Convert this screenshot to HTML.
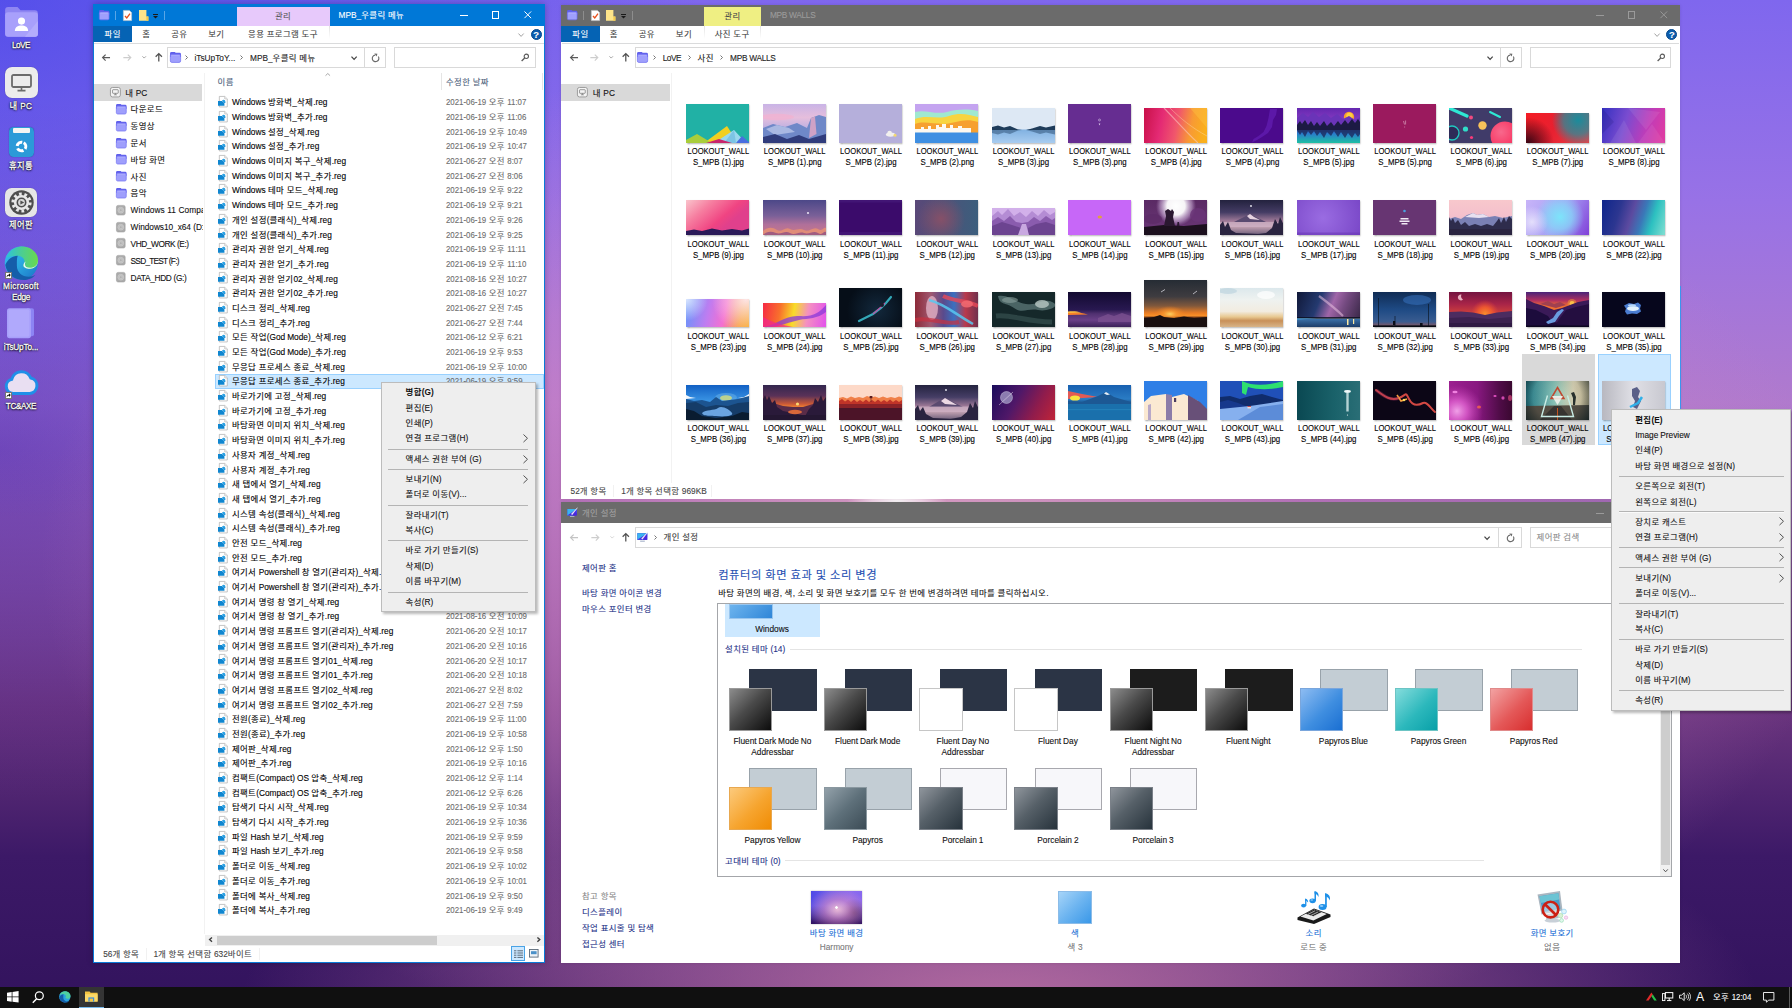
<!DOCTYPE html>
<html lang="ko"><head><meta charset="utf-8"><title>Desktop</title>
<style>
*{box-sizing:border-box;margin:0;padding:0}
html,body{width:1792px;height:1008px;overflow:hidden;background:#3a1a66}
body{font-family:"Liberation Sans","Noto Sans CJK KR",sans-serif;font-size:8.4px;letter-spacing:.4px;word-spacing:-.3px;color:#000;line-height:1;-webkit-text-stroke:.1px}
i{font-style:normal;font-size:.99em;letter-spacing:0;display:inline-block;transform:scaleY(1.05);transform-origin:50% 78%}
.fd i{font-size:.937em}
#desk{position:absolute;left:0;top:0;width:1792px;height:1008px;overflow:hidden;
background:
radial-gradient(ellipse 50px 14px at 897px 501px,rgba(255,255,255,.95) 0%,rgba(255,240,250,.7) 50%,rgba(255,230,245,0) 100%),
radial-gradient(ellipse 760px 260px at 1000px 1010px,rgba(186,112,164,.95) 0%,rgba(170,100,160,.6) 45%,rgba(150,80,150,0) 100%),
radial-gradient(ellipse 900px 520px at 940px 560px,rgba(236,176,204,.95) 0%,rgba(206,128,196,.62) 42%,rgba(190,120,200,0) 100%),
radial-gradient(ellipse 700px 520px at 0px 0px,rgba(58,64,232,.6) 0%,rgba(58,64,232,0) 100%),
radial-gradient(ellipse 500px 350px at 0px 450px,rgba(66,30,170,.5) 0%,rgba(66,30,170,0) 100%),
linear-gradient(180deg,#7f67ee 0%,#9872e6 20%,#b07acd 40%,#9a66b6 50%,#6b357e 70%,#3c1967 85%,#32135d 100%)}
.a{position:absolute}
.t{position:absolute;white-space:nowrap;transform:translateY(-50%)}
.tc{position:absolute;white-space:nowrap;transform:translate(-50%,-50%);text-align:center}
.win{position:absolute;background:#fff;overflow:hidden}
svg{position:absolute;overflow:visible}
.dlab{position:absolute;word-spacing:0;color:#fff;font-size:8.2px;-webkit-text-stroke:.25px;text-align:center;white-space:nowrap;transform:translate(-50%,-50%) scaleY(1.1);text-shadow:0 0 2px #000,0 1px 2px rgba(0,0,0,.9),0 0 1px #000}
.menu{position:absolute;background:#f2f2f2;border:1px solid #a0a0a0;box-shadow:2px 2px 3px rgba(0,0,0,.35)}
.menu .sep{position:absolute;height:1px;background:#919191}
.lbl{position:absolute;letter-spacing:0;word-spacing:0;width:76px;text-align:center;font-size:7.85px;line-height:9.82px;color:#000;transform:translateX(-50%) scaleY(1.12);transform-origin:50% 0}
.lbl span{font-size:7.6px}
.th{position:absolute;overflow:hidden;box-shadow:0.5px 1px 1.5px rgba(0,0,0,.35)}
.link{color:#1e3287}

</style></head><body>
<div id="desk">
<svg style="left:4.6px;top:6.8px" width="33" height="29.8" viewBox="0 0 33 30"><path d="M3 0h9.5l3 3.2H30a3 3 0 0 1 3 3V27a3 3 0 0 1-3 3H3a3 3 0 0 1-3-3V3a3 3 0 0 1 3-3z" fill="#8f86f2"/><rect x="0" y="5.2" width="33" height="24.8" rx="3.2" fill="#a8a0fb"/><path d="M20 30L33 14v13a3 3 0 0 1-3 3z" fill="#b4adfc"/><circle cx="16.5" cy="14.2" r="3.6" fill="#fff"/><path d="M9.8 24.2c0-4.2 3-5.6 6.7-5.6s6.7 1.4 6.7 5.6z" fill="#fff"/></svg>
<div class="dlab" style="left:21.00px;top:46.30px;font-size:8.2px;word-spacing:0;letter-spacing:-0.558px;transform:translate(-50%,-50%) scaleY(1.1);">LoVE</div>
<div class="a" style="left:4.6px;top:67.4px;width:33px;height:30.2px;border-radius:7px;background:#ececec;box-shadow:0 0 1px rgba(0,0,0,.4)"></div>
<svg style="left:10.6px;top:73.6px" width="21" height="18" viewBox="0 0 21 18"><rect x="1" y="1" width="19" height="12" rx="1.5" fill="none" stroke="#6b6b6b" stroke-width="1.8"/><path d="M6.5 16.6h8M10.5 13v3.4" stroke="#6b6b6b" stroke-width="1.6"/></svg>
<div class="dlab" style="left:21px;top:106.5px">내 PC</div>
<div class="a" style="left:8.6px;top:126.6px;width:25.4px;height:30.8px;border-radius:4.5px;background:#2c9ad8;box-shadow:0 0 1px rgba(0,0,40,.5)"></div>
<div class="a" style="left:12.8px;top:128.2px;width:17.2px;height:4.8px;border-radius:1px;background:#f4f4f2"></div>
<svg style="left:14.6px;top:140.2px" width="13" height="13" viewBox="0 0 13 13"><circle cx="6.500" cy="6.500" r="4.300" fill="none" stroke="#fff" stroke-width="3" stroke-dasharray="6.800 2.200" transform="rotate(-60 6.500 6.500)"/><circle cx="6.500" cy="6.500" r="2.300" fill="#2c9ad8"/></svg>
<div class="dlab" style="left:21px;top:167px">휴지통</div>
<div class="a" style="left:5px;top:188.2px;width:32.2px;height:28.8px;border-radius:6.5px;background:#e6e6e6;box-shadow:0 0 1px rgba(0,0,0,.4)"></div>
<svg style="left:8.6px;top:190.2px" width="25" height="25" viewBox="0 0 25 25"><circle cx="12.500" cy="12.500" r="12.200" fill="#4e4e4e"/><circle cx="12.500" cy="12.500" r="8.600" fill="none" stroke="#e8e8e8" stroke-width="3" stroke-dasharray="2.700 2.700"/><circle cx="12.500" cy="12.500" r="6.300" fill="none" stroke="#e8e8e8" stroke-width="2.600"/><circle cx="12.500" cy="12.500" r="3.400" fill="#d8d8d8"/><path d="M11.400 10.400l3.800 2.100-3.800 2.100z" fill="#4e4e4e"/></svg>
<div class="dlab" style="left:21px;top:226.4px">제어판</div>
<svg style="left:4px;top:245.6px" width="34.6" height="34" viewBox="0 0 34 34"><defs><linearGradient id="eg1" x1="0" y1="0" x2="1" y2="1"><stop offset="0" stop-color="#35c1f1"/><stop offset=".5" stop-color="#2aa7e0"/><stop offset="1" stop-color="#1b6fc4"/></linearGradient><linearGradient id="eg2" x1="0" y1="0" x2="1" y2="0"><stop offset="0" stop-color="#2fc3d6"/><stop offset="1" stop-color="#6ad94b"/></linearGradient></defs><circle cx="17" cy="17" r="16.6" fill="url(#eg1)"/><path d="M2 12C5 3 13 .4 18 .4c9 0 15.8 6.4 15.8 14 0 5-4 8.400-8.600 8.400-3.800 0-6.400-1.600-6.400-3.400 0-1.400 1.400-1.800 1.400-4 0-3-3-5.600-7.200-5.600C8 9.800 4 11 2 12z" fill="url(#eg2)"/><path d="M12.600 20c0 6 5 10.800 11.800 10.800 2.600 0 5-.8 6.800-2-3 4-7.600 5.200-11.600 5.200C10.200 34 2.600 28 1 19c2.400-5.600 7-9.200 12.400-9.200-1 2.600-.8 6.400-.8 10.200z" fill="#155eaa"/><path d="M19.200 19.400c0 1.800 2.600 3.400 6.200 3.400 4.400 0 8.200-3.200 8.400-8-1 6-5 7-8 7-3.200 0-5.200-1.200-5.200-3.600 0-1.200.6-1.800.8-2.600-1.400.8-2.200 2.200-2.200 3.800z" fill="#e6f4fb"/></svg>
<div class="a" style="left:4.6px;top:271.6px;width:7.4px;height:7.4px;background:#fff;border:.6px solid #777"></div><svg style="left:5.8px;top:272.8px" width="5" height="5" viewBox="0 0 10 10"><path d="M1 9C1 5 3.500 3 6 3V.6L9.600 4.200 6 7.800V5.400C4 5.400 2.400 6.400 1 9z" fill="#111"/></svg>
<div class="dlab" style="left:21.00px;top:287.40px;font-size:8.2px;word-spacing:0;letter-spacing:0.287px;transform:translate(-50%,-50%) scaleY(1.1);">Microsoft</div>
<div class="dlab" style="left:21.00px;top:297.90px;font-size:8.2px;word-spacing:0;letter-spacing:-0.281px;transform:translate(-50%,-50%) scaleY(1.1);">Edge</div>
<svg style="left:7.4px;top:308px" width="27" height="30.4" viewBox="0 0 27 30"><path d="M20 0h5a2 2 0 0 1 2 2v24a2 2 0 0 1-2 2h-5z" fill="#8c84f4"/><rect x="20.600" y="5" width="2.6" height="8" fill="#f4f2ff"/><rect x="0" y="0" width="24" height="30" rx="2.600" fill="#a79ffb"/><rect x="1.400" y="1.400" width="21" height="27.200" rx="2" fill="#b0a9fc"/></svg>
<div class="dlab" style="left:21.00px;top:347.80px;font-size:8.2px;word-spacing:0;letter-spacing:-0.165px;transform:translate(-50%,-50%) scaleY(1.1);">iTsUpTo...</div>
<svg style="left:4px;top:368.6px" width="34.4" height="26" viewBox="0 0 34 26"><path d="M9 24.400A7.200 7.200 0 0 1 7.600 10.200 10 10 0 0 1 26.600 9 7.800 7.800 0 0 1 25.600 24.400z" fill="#e9dff2" stroke="#1f8fe8" stroke-width="3"/></svg>
<div class="a" style="left:4.6px;top:391.6px;width:7.4px;height:7.4px;background:#fff;border:.6px solid #777"></div><svg style="left:5.8px;top:392.8px" width="5" height="5" viewBox="0 0 10 10"><path d="M1 9C1 5 3.500 3 6 3V.6L9.600 4.200 6 7.800V5.400C4 5.400 2.400 6.400 1 9z" fill="#111"/></svg>
<div class="dlab" style="left:21.00px;top:407.30px;font-size:8.2px;word-spacing:0;letter-spacing:-0.394px;transform:translate(-50%,-50%) scaleY(1.1);">TC&amp;AXE</div>
<div class="a" style="left:92.60px;top:4.00px;width:452.40px;height:959.00px;background:#fff;border:1px solid #0a7ad6;box-shadow:0 0 6px rgba(0,0,0,.25)"></div>
<div class="a" style="left:92.60px;top:4.00px;width:452.40px;height:22.00px;background:#0078d7"></div>
<svg style="left:99.20px;top:9.70px" width="10.40" height="10.19" viewBox="0 0 22 21.600"><path d="M3 0h6.500l2 1.600H19a3 3 0 0 1 3 3V10H0V3a3 3 0 0 1 3-3z" fill="#5f5fea"/><rect x=".7" y="4.300" width="20.600" height="16.600" rx="3" fill="#9f9ffc" stroke="#6e6ef2" stroke-width="1.400"/><rect x="3" y="6" width="16" height="1.200" rx=".6" fill="#b8b8fe" opacity=".8"/></svg>
<div class="a" style="left:115.20px;top:10.60px;width:0.80px;height:9.00px;background:#5aa6e6"></div>
<svg style="left:123.00px;top:10.00px" width="9.00" height="11.00" viewBox="0 0 9 11"><path d="M.4.4h6l2.200 2.200v8H.4z" fill="#fff" stroke="#c8c8c8" stroke-width=".6"/><path d="M2 6l1.800 2L7 3.600" fill="none" stroke="#e8501c" stroke-width="1.300"/></svg>
<svg style="left:138.60px;top:10.00px" width="9.40" height="10.80" viewBox="0 0 9.400 10.800"><path d="M0 0h7.400v6.400h2v4.400H0z" fill="#fde48a"/><path d="M7.400 6.400h2v4.400h-2z" fill="#f2c94c"/></svg>
<div class="a" style="left:153.40px;top:14.20px;width:5.00px;height:0.90px;background:#1a1a1a"></div>
<svg style="left:153.40px;top:15.80px" width="5.00" height="2.60" viewBox="0 0 5 2.600"><path d="M0 0h5L2.500 2.600z" fill="#1a1a1a"/></svg>
<div class="a" style="left:164.40px;top:10.60px;width:0.80px;height:9.00px;background:#5aa6e6"></div>
<div class="a" style="left:236.80px;top:6.80px;width:92.80px;height:19.40px;background:#e7c9fb"></div>
<div class="tc" style="left:283.00px;top:16.00px;color:#5a5a5a;">관리</div>
<div class="t" style="left:338.60px;top:15.00px;color:#fff;"><i>MPB_</i>우클릭 메뉴</div>
<div class="a" style="left:460.40px;top:15.00px;width:7.40px;height:0.90px;background:#fff"></div>
<div class="a" style="left:492.00px;top:11.40px;width:7.20px;height:7.20px;border:1px solid #fff"></div>
<svg style="left:523.80px;top:11.20px" width="7.60" height="7.60" viewBox="0 0 10 10"><path d="M.6.6l8.800 8.800M9.400.6L.6 9.400" stroke="#fff" stroke-width="1.300"/></svg>
<div class="a" style="left:93.60px;top:26.00px;width:450.40px;height:17.00px;background:#fff"></div>
<div class="a" style="left:93.60px;top:42.80px;width:450.40px;height:0.80px;background:#dadbdc"></div>
<div class="a" style="left:92.60px;top:26.00px;width:39.30px;height:15.90px;background:#0563b4"></div>
<div class="tc" style="left:112.70px;top:34.20px;color:#fff;">파일</div>
<div class="tc" style="left:146.30px;top:34.20px;color:#444;">홈</div>
<div class="tc" style="left:179.30px;top:34.20px;color:#444;">공유</div>
<div class="tc" style="left:216.30px;top:34.20px;color:#444;">보기</div>
<div class="tc" style="left:282.90px;top:34.20px;color:#444;">응용 프로그램 도구</div>
<div class="a" style="left:236.60px;top:26.00px;width:0.80px;height:13.00px;background:linear-gradient(#e2e2e2,#fff)"></div>
<div class="a" style="left:329.20px;top:26.00px;width:0.80px;height:13.00px;background:linear-gradient(#e2e2e2,#fff)"></div>
<svg style="left:517.90px;top:32.60px" width="6.20" height="4.20" viewBox="0 0 10 6.600"><path d="M.8.8L5 5.400 9.200.8" fill="none" stroke="#9a9a9a" stroke-width="1.5"/></svg>
<div class="a" style="left:530.60px;top:28.80px;width:11.20px;height:11.20px;border-radius:50%;background:#0b5cad;border:.6px solid #084a8c"></div><div class="tc" style="left:536.20px;top:34.60px;color:#fff;font-weight:bold;font-size:9.5px"><i>?</i></div>
<svg style="left:102.30px;top:54.00px" width="8.40" height="7.20" viewBox="0 0 14 12"><path d="M6 1L1 6l5 5M1 6h12.400" fill="none" stroke="#5a5a5a" stroke-width="2"/></svg><svg style="left:122.80px;top:54.00px" width="8.40" height="7.20" viewBox="0 0 14 12"><path d="M8 1l5 5-5 5M13 6H.6" fill="none" stroke="#cdcdcd" stroke-width="1.900"/></svg><svg style="left:141.60px;top:56.00px" width="4.40" height="2.60" viewBox="0 0 8 5"><path d="M.6.6L4 4 7.400.6" fill="none" stroke="#7a7a7a" stroke-width="1.300"/></svg><svg style="left:154.50px;top:53.20px" width="7.60" height="8.80" viewBox="0 0 12 14"><path d="M1 6l5-5 5 5M6 1v12.600" fill="none" stroke="#505050" stroke-width="2"/></svg>
<div class="a" style="left:167.20px;top:47.00px;width:218.60px;height:20.60px;border:1px solid #d9d9d9;background:#fff"></div>
<div class="a" style="left:364.40px;top:47.00px;width:0.90px;height:20.60px;background:#d9d9d9"></div>
<svg style="left:169.50px;top:52.01px" width="11.00" height="10.78" viewBox="0 0 22 21.600"><path d="M3 0h6.500l2 1.600H19a3 3 0 0 1 3 3V10H0V3a3 3 0 0 1 3-3z" fill="#5f5fea"/><rect x=".7" y="4.300" width="20.600" height="16.600" rx="3" fill="#9f9ffc" stroke="#6e6ef2" stroke-width="1.400"/><rect x="3" y="6" width="16" height="1.200" rx=".6" fill="#b8b8fe" opacity=".8"/></svg>
<svg style="left:185.40px;top:55.40px" width="3.00" height="5.00" viewBox="0 0 3 5"><path d="M.5.5l2 2-2 2" fill="none" stroke="#666" stroke-width=".9"/></svg>
<div class="t" style="left:194.40px;top:57.60px;color:#222;"><i>iTsUpToY...</i></div>
<svg style="left:240.40px;top:55.40px" width="3.00" height="5.00" viewBox="0 0 3 5"><path d="M.5.5l2 2-2 2" fill="none" stroke="#666" stroke-width=".9"/></svg>
<div class="t" style="left:250.00px;top:57.60px;color:#222;"><i>MPB_</i>우클릭 메뉴</div>
<svg style="left:350.90px;top:56.20px" width="6.20" height="4.20" viewBox="0 0 10 6.600"><path d="M.8.8L5 5.400 9.200.8" fill="none" stroke="#444" stroke-width="2.0"/></svg>
<svg style="left:370.50px;top:53.00px" width="9.00" height="9.60" viewBox="0 0 9 9.600"><path d="M7.300 3.500A3.300 3.300 0 1 1 4.200 2.100" fill="none" stroke="#6a6a6a" stroke-width="1.150"/><path d="M3.300.5l3.100.2-.7 2.900z" fill="#6a6a6a"/></svg>
<div class="a" style="left:394.20px;top:47.00px;width:141.40px;height:20.60px;border:1px solid #d9d9d9;background:#fff"></div>
<svg style="left:520.80px;top:53.40px" width="8.40" height="8.80" viewBox="0 0 12 12"><circle cx="7.600" cy="4.400" r="3.100" fill="none" stroke="#5a5a5a" stroke-width="1.500"/><path d="M5.300 6.800L.9 11.200" stroke="#5a5a5a" stroke-width="1.800"/></svg>
<div class="a" style="left:93.60px;top:84.00px;width:108.60px;height:16.80px;background:#d9d9d9"></div>
<div class="a" style="left:94px;top:72px;width:109px;height:860px;overflow:hidden">
<svg style="left:16.10px;top:15.10px" width="10.8" height="10.4" viewBox="0 0 22 21"><rect x=".9" y=".9" width="20.2" height="19.2" rx="4" fill="#f4f4f4" stroke="#8a8a8a" stroke-width="1.6"/><rect x="5.2" y="5.4" width="11.6" height="7.4" rx="1" fill="none" stroke="#6f6f6f" stroke-width="1.4"/><path d="M8 15.8h6M11 12.8v3" stroke="#6f6f6f" stroke-width="1.4"/></svg>
<div class="t" style="left:31.20px;top:20.50px;color:#111">내 <i>PC</i></div>
<svg style="left:21.90px;top:31.93px" width="10.60" height="10.39" viewBox="0 0 22 21.600"><path d="M3 0h6.500l2 1.600H19a3 3 0 0 1 3 3V10H0V3a3 3 0 0 1 3-3z" fill="#5f5fea"/><rect x=".7" y="4.300" width="20.600" height="16.600" rx="3" fill="#9f9ffc" stroke="#6e6ef2" stroke-width="1.400"/><rect x="3" y="6" width="16" height="1.200" rx=".6" fill="#b8b8fe" opacity=".8"/></svg>
<div class="t" style="left:36.60px;top:37.32px;color:#111">다운로드</div>
<svg style="left:21.90px;top:48.75px" width="10.60" height="10.39" viewBox="0 0 22 21.600"><path d="M3 0h6.500l2 1.600H19a3 3 0 0 1 3 3V10H0V3a3 3 0 0 1 3-3z" fill="#5f5fea"/><rect x=".7" y="4.300" width="20.600" height="16.600" rx="3" fill="#9f9ffc" stroke="#6e6ef2" stroke-width="1.400"/><rect x="3" y="6" width="16" height="1.200" rx=".6" fill="#b8b8fe" opacity=".8"/></svg>
<div class="t" style="left:36.60px;top:54.14px;color:#111">동영상</div>
<svg style="left:21.90px;top:65.57px" width="10.60" height="10.39" viewBox="0 0 22 21.600"><path d="M3 0h6.500l2 1.600H19a3 3 0 0 1 3 3V10H0V3a3 3 0 0 1 3-3z" fill="#5f5fea"/><rect x=".7" y="4.300" width="20.600" height="16.600" rx="3" fill="#9f9ffc" stroke="#6e6ef2" stroke-width="1.400"/><rect x="3" y="6" width="16" height="1.200" rx=".6" fill="#b8b8fe" opacity=".8"/></svg>
<div class="t" style="left:36.60px;top:70.96px;color:#111">문서</div>
<svg style="left:21.90px;top:82.39px" width="10.60" height="10.39" viewBox="0 0 22 21.600"><path d="M3 0h6.500l2 1.600H19a3 3 0 0 1 3 3V10H0V3a3 3 0 0 1 3-3z" fill="#5f5fea"/><rect x=".7" y="4.300" width="20.600" height="16.600" rx="3" fill="#9f9ffc" stroke="#6e6ef2" stroke-width="1.400"/><rect x="3" y="6" width="16" height="1.200" rx=".6" fill="#b8b8fe" opacity=".8"/></svg>
<div class="t" style="left:36.60px;top:87.78px;color:#111">바탕 화면</div>
<svg style="left:21.90px;top:99.21px" width="10.60" height="10.39" viewBox="0 0 22 21.600"><path d="M3 0h6.500l2 1.600H19a3 3 0 0 1 3 3V10H0V3a3 3 0 0 1 3-3z" fill="#5f5fea"/><rect x=".7" y="4.300" width="20.600" height="16.600" rx="3" fill="#9f9ffc" stroke="#6e6ef2" stroke-width="1.400"/><rect x="3" y="6" width="16" height="1.200" rx=".6" fill="#b8b8fe" opacity=".8"/></svg>
<div class="t" style="left:36.60px;top:104.60px;color:#111">사진</div>
<svg style="left:21.90px;top:116.03px" width="10.60" height="10.39" viewBox="0 0 22 21.600"><path d="M3 0h6.500l2 1.600H19a3 3 0 0 1 3 3V10H0V3a3 3 0 0 1 3-3z" fill="#5f5fea"/><rect x=".7" y="4.300" width="20.600" height="16.600" rx="3" fill="#9f9ffc" stroke="#6e6ef2" stroke-width="1.400"/><rect x="3" y="6" width="16" height="1.200" rx=".6" fill="#b8b8fe" opacity=".8"/></svg>
<div class="t" style="left:36.60px;top:121.42px;color:#111">음악</div>
<svg style="left:22.40px;top:132.84px" width="9.6" height="10.4" viewBox="0 0 20 22"><rect x=".8" y=".8" width="18.4" height="20.4" rx="3.5" fill="#ababab" stroke="#9c9c9c" stroke-width="1.2"/><circle cx="10" cy="11" r="6.2" fill="#bdbdbd" stroke="#cfcfcf" stroke-width="1.2"/><circle cx="10" cy="11" r="3" fill="#b0b0b0" stroke="#d2d2d2" stroke-width="1.1"/></svg>
<div class="t" style="left:36.60px;top:138.24px;font-size:8.3px;word-spacing:0;letter-spacing:0.085px;transform:translateY(-50%) scaleY(1.1);color:#111">Windows 11 Compa</div>
<svg style="left:22.40px;top:149.66px" width="9.6" height="10.4" viewBox="0 0 20 22"><rect x=".8" y=".8" width="18.4" height="20.4" rx="3.5" fill="#ababab" stroke="#9c9c9c" stroke-width="1.2"/><circle cx="10" cy="11" r="6.2" fill="#bdbdbd" stroke="#cfcfcf" stroke-width="1.2"/><circle cx="10" cy="11" r="3" fill="#b0b0b0" stroke="#d2d2d2" stroke-width="1.1"/></svg>
<div class="t" style="left:36.60px;top:155.06px;font-size:8.3px;word-spacing:0;letter-spacing:-0.044px;transform:translateY(-50%) scaleY(1.1);color:#111">Windows10_x64 (D:</div>
<svg style="left:22.40px;top:166.48px" width="9.6" height="10.4" viewBox="0 0 20 22"><rect x=".8" y=".8" width="18.4" height="20.4" rx="3.5" fill="#ababab" stroke="#9c9c9c" stroke-width="1.2"/><circle cx="10" cy="11" r="6.2" fill="#bdbdbd" stroke="#cfcfcf" stroke-width="1.2"/><circle cx="10" cy="11" r="3" fill="#b0b0b0" stroke="#d2d2d2" stroke-width="1.1"/></svg>
<div class="t" style="left:36.60px;top:171.88px;font-size:8.3px;word-spacing:0;letter-spacing:-0.425px;transform:translateY(-50%) scaleY(1.1);color:#111">VHD_WORK (E:)</div>
<svg style="left:22.40px;top:183.30px" width="9.6" height="10.4" viewBox="0 0 20 22"><rect x=".8" y=".8" width="18.4" height="20.4" rx="3.5" fill="#ababab" stroke="#9c9c9c" stroke-width="1.2"/><circle cx="10" cy="11" r="6.2" fill="#bdbdbd" stroke="#cfcfcf" stroke-width="1.2"/><circle cx="10" cy="11" r="3" fill="#b0b0b0" stroke="#d2d2d2" stroke-width="1.1"/></svg>
<div class="t" style="left:36.60px;top:188.70px;font-size:8.3px;word-spacing:0;letter-spacing:-0.757px;transform:translateY(-50%) scaleY(1.1);color:#111">SSD_TEST (F:)</div>
<svg style="left:22.40px;top:200.12px" width="9.6" height="10.4" viewBox="0 0 20 22"><rect x=".8" y=".8" width="18.4" height="20.4" rx="3.5" fill="#ababab" stroke="#9c9c9c" stroke-width="1.2"/><circle cx="10" cy="11" r="6.2" fill="#bdbdbd" stroke="#cfcfcf" stroke-width="1.2"/><circle cx="10" cy="11" r="3" fill="#b0b0b0" stroke="#d2d2d2" stroke-width="1.1"/></svg>
<div class="t" style="left:36.60px;top:205.52px;font-size:8.3px;word-spacing:0;letter-spacing:-0.321px;transform:translateY(-50%) scaleY(1.1);color:#111">DATA_HDD (G:)</div>
</div>
<div class="a" style="left:204.40px;top:73.00px;width:0.80px;height:861.00px;background:#f2f2f2"></div>
<div class="t" style="left:217.60px;top:81.60px;color:#4c607a;">이름</div>
<div class="t" style="left:446.00px;top:81.60px;color:#4c607a;">수정한 날짜</div>
<div class="a" style="left:441.40px;top:73.00px;width:0.80px;height:17.40px;background:#e5e5e5"></div>
<div class="a" style="left:542.00px;top:73.00px;width:0.80px;height:17.40px;background:#e5e5e5"></div>
<svg style="left:324.60px;top:73.40px" width="5.60" height="3.00" viewBox="0 0 8 4.500"><path d="M.6 4L4 .8 7.400 4" fill="none" stroke="#7a7a7a" stroke-width="1"/></svg>
<div class="a" style="left:215.00px;top:373.91px;width:329.00px;height:14.60px;background:#cce8ff;border:1px solid #99d1ff"></div>
<svg style="left:218.30px;top:96.20px" width="9.8" height="11.4" viewBox="0 0 19 22"><path d="M2.600 .8h10.400l5 4.800V21.200H2.600z" fill="#fff" stroke="#a8a8a8" stroke-width="1.300"/><path d="M13 .8v4.800h5" fill="#f4f4f4" stroke="#a8a8a8" stroke-width="1"/><path d="M0 9.600h8l2-2.400 3.600 1.600 1 3.600-2.200 2 .2 4.600H0z" fill="#0f86d0"/><path d="M8.400 9.400l2-2 2.600 1.200.8 2.800-2 1.800-1.600-2z" fill="#2aa4e6"/><path d="M8.600 10.400l1.800 1.800M11.800 13.200l1.400 1.600" stroke="#e8f6fe" stroke-width="1.300"/></svg>
<div class="t" style="left:231.90px;top:102.30px;color:#000"><i>Windows</i> 방화벽<i>_</i>삭제<i>.reg</i></div>
<div class="t fd" style="left:446.00px;top:102.30px;color:#6d6d6d"><i>2021-06-19</i> 오후 <i>11:07</i></div>
<svg style="left:218.30px;top:110.89px" width="9.8" height="11.4" viewBox="0 0 19 22"><path d="M2.600 .8h10.400l5 4.800V21.200H2.600z" fill="#fff" stroke="#a8a8a8" stroke-width="1.300"/><path d="M13 .8v4.800h5" fill="#f4f4f4" stroke="#a8a8a8" stroke-width="1"/><path d="M0 9.600h8l2-2.400 3.600 1.600 1 3.600-2.200 2 .2 4.600H0z" fill="#0f86d0"/><path d="M8.400 9.400l2-2 2.600 1.200.8 2.800-2 1.800-1.600-2z" fill="#2aa4e6"/><path d="M8.600 10.400l1.800 1.800M11.800 13.200l1.400 1.600" stroke="#e8f6fe" stroke-width="1.300"/></svg>
<div class="t" style="left:231.90px;top:116.99px;color:#000"><i>Windows</i> 방화벽<i>_</i>추가<i>.reg</i></div>
<div class="t fd" style="left:446.00px;top:116.99px;color:#6d6d6d"><i>2021-06-19</i> 오후 <i>11:06</i></div>
<svg style="left:218.30px;top:125.58px" width="9.8" height="11.4" viewBox="0 0 19 22"><path d="M2.600 .8h10.400l5 4.800V21.200H2.600z" fill="#fff" stroke="#a8a8a8" stroke-width="1.300"/><path d="M13 .8v4.800h5" fill="#f4f4f4" stroke="#a8a8a8" stroke-width="1"/><path d="M0 9.600h8l2-2.400 3.600 1.600 1 3.600-2.200 2 .2 4.600H0z" fill="#0f86d0"/><path d="M8.400 9.400l2-2 2.600 1.200.8 2.800-2 1.800-1.600-2z" fill="#2aa4e6"/><path d="M8.600 10.400l1.800 1.800M11.800 13.200l1.400 1.600" stroke="#e8f6fe" stroke-width="1.300"/></svg>
<div class="t" style="left:231.90px;top:131.68px;color:#000"><i>Windows</i> 설정<i>_</i>삭제<i>.reg</i></div>
<div class="t fd" style="left:446.00px;top:131.68px;color:#6d6d6d"><i>2021-06-19</i> 오후 <i>10:49</i></div>
<svg style="left:218.30px;top:140.27px" width="9.8" height="11.4" viewBox="0 0 19 22"><path d="M2.600 .8h10.400l5 4.800V21.200H2.600z" fill="#fff" stroke="#a8a8a8" stroke-width="1.300"/><path d="M13 .8v4.800h5" fill="#f4f4f4" stroke="#a8a8a8" stroke-width="1"/><path d="M0 9.600h8l2-2.400 3.600 1.600 1 3.600-2.200 2 .2 4.600H0z" fill="#0f86d0"/><path d="M8.400 9.400l2-2 2.600 1.200.8 2.800-2 1.800-1.600-2z" fill="#2aa4e6"/><path d="M8.600 10.400l1.800 1.800M11.800 13.200l1.400 1.600" stroke="#e8f6fe" stroke-width="1.300"/></svg>
<div class="t" style="left:231.90px;top:146.37px;color:#000"><i>Windows</i> 설정<i>_</i>추가<i>.reg</i></div>
<div class="t fd" style="left:446.00px;top:146.37px;color:#6d6d6d"><i>2021-06-19</i> 오후 <i>10:47</i></div>
<svg style="left:218.30px;top:154.96px" width="9.8" height="11.4" viewBox="0 0 19 22"><path d="M2.600 .8h10.400l5 4.800V21.200H2.600z" fill="#fff" stroke="#a8a8a8" stroke-width="1.300"/><path d="M13 .8v4.800h5" fill="#f4f4f4" stroke="#a8a8a8" stroke-width="1"/><path d="M0 9.600h8l2-2.400 3.600 1.600 1 3.600-2.200 2 .2 4.600H0z" fill="#0f86d0"/><path d="M8.400 9.400l2-2 2.600 1.200.8 2.800-2 1.800-1.600-2z" fill="#2aa4e6"/><path d="M8.600 10.400l1.800 1.800M11.800 13.200l1.400 1.600" stroke="#e8f6fe" stroke-width="1.300"/></svg>
<div class="t" style="left:231.90px;top:161.06px;color:#000"><i>Windows</i> 이미지 복구<i>_</i>삭제<i>.reg</i></div>
<div class="t fd" style="left:446.00px;top:161.06px;color:#6d6d6d"><i>2021-06-27</i> 오전 <i>8:07</i></div>
<svg style="left:218.30px;top:169.65px" width="9.8" height="11.4" viewBox="0 0 19 22"><path d="M2.600 .8h10.400l5 4.800V21.200H2.600z" fill="#fff" stroke="#a8a8a8" stroke-width="1.300"/><path d="M13 .8v4.800h5" fill="#f4f4f4" stroke="#a8a8a8" stroke-width="1"/><path d="M0 9.600h8l2-2.400 3.600 1.600 1 3.600-2.200 2 .2 4.600H0z" fill="#0f86d0"/><path d="M8.400 9.400l2-2 2.600 1.200.8 2.800-2 1.800-1.600-2z" fill="#2aa4e6"/><path d="M8.600 10.400l1.800 1.800M11.800 13.200l1.400 1.600" stroke="#e8f6fe" stroke-width="1.300"/></svg>
<div class="t" style="left:231.90px;top:175.75px;color:#000"><i>Windows</i> 이미지 복구<i>_</i>추가<i>.reg</i></div>
<div class="t fd" style="left:446.00px;top:175.75px;color:#6d6d6d"><i>2021-06-27</i> 오전 <i>8:06</i></div>
<svg style="left:218.30px;top:184.34px" width="9.8" height="11.4" viewBox="0 0 19 22"><path d="M2.600 .8h10.400l5 4.800V21.200H2.600z" fill="#fff" stroke="#a8a8a8" stroke-width="1.300"/><path d="M13 .8v4.800h5" fill="#f4f4f4" stroke="#a8a8a8" stroke-width="1"/><path d="M0 9.600h8l2-2.400 3.600 1.600 1 3.600-2.200 2 .2 4.600H0z" fill="#0f86d0"/><path d="M8.400 9.400l2-2 2.600 1.200.8 2.800-2 1.800-1.600-2z" fill="#2aa4e6"/><path d="M8.600 10.400l1.800 1.800M11.800 13.200l1.400 1.600" stroke="#e8f6fe" stroke-width="1.300"/></svg>
<div class="t" style="left:231.90px;top:190.44px;color:#000"><i>Windows</i> 테마 모드<i>_</i>삭제<i>.reg</i></div>
<div class="t fd" style="left:446.00px;top:190.44px;color:#6d6d6d"><i>2021-06-19</i> 오후 <i>9:22</i></div>
<svg style="left:218.30px;top:199.03px" width="9.8" height="11.4" viewBox="0 0 19 22"><path d="M2.600 .8h10.400l5 4.800V21.200H2.600z" fill="#fff" stroke="#a8a8a8" stroke-width="1.300"/><path d="M13 .8v4.800h5" fill="#f4f4f4" stroke="#a8a8a8" stroke-width="1"/><path d="M0 9.600h8l2-2.400 3.600 1.600 1 3.600-2.200 2 .2 4.600H0z" fill="#0f86d0"/><path d="M8.400 9.400l2-2 2.600 1.200.8 2.800-2 1.800-1.600-2z" fill="#2aa4e6"/><path d="M8.600 10.400l1.800 1.800M11.800 13.200l1.400 1.600" stroke="#e8f6fe" stroke-width="1.300"/></svg>
<div class="t" style="left:231.90px;top:205.13px;color:#000"><i>Windows</i> 테마 모드<i>_</i>추가<i>.reg</i></div>
<div class="t fd" style="left:446.00px;top:205.13px;color:#6d6d6d"><i>2021-06-19</i> 오후 <i>9:21</i></div>
<svg style="left:218.30px;top:213.72px" width="9.8" height="11.4" viewBox="0 0 19 22"><path d="M2.600 .8h10.400l5 4.800V21.200H2.600z" fill="#fff" stroke="#a8a8a8" stroke-width="1.300"/><path d="M13 .8v4.800h5" fill="#f4f4f4" stroke="#a8a8a8" stroke-width="1"/><path d="M0 9.600h8l2-2.400 3.600 1.600 1 3.600-2.200 2 .2 4.600H0z" fill="#0f86d0"/><path d="M8.400 9.400l2-2 2.600 1.200.8 2.800-2 1.800-1.600-2z" fill="#2aa4e6"/><path d="M8.600 10.400l1.800 1.800M11.800 13.200l1.400 1.600" stroke="#e8f6fe" stroke-width="1.300"/></svg>
<div class="t" style="left:231.90px;top:219.82px;color:#000">개인 설정<i>(</i>클래식<i>)_</i>삭제<i>.reg</i></div>
<div class="t fd" style="left:446.00px;top:219.82px;color:#6d6d6d"><i>2021-06-19</i> 오후 <i>9:26</i></div>
<svg style="left:218.30px;top:228.41px" width="9.8" height="11.4" viewBox="0 0 19 22"><path d="M2.600 .8h10.400l5 4.800V21.200H2.600z" fill="#fff" stroke="#a8a8a8" stroke-width="1.300"/><path d="M13 .8v4.800h5" fill="#f4f4f4" stroke="#a8a8a8" stroke-width="1"/><path d="M0 9.600h8l2-2.400 3.600 1.600 1 3.600-2.200 2 .2 4.600H0z" fill="#0f86d0"/><path d="M8.400 9.400l2-2 2.600 1.200.8 2.800-2 1.800-1.600-2z" fill="#2aa4e6"/><path d="M8.600 10.400l1.800 1.800M11.800 13.200l1.400 1.600" stroke="#e8f6fe" stroke-width="1.300"/></svg>
<div class="t" style="left:231.90px;top:234.51px;color:#000">개인 설정<i>(</i>클래식<i>)_</i>추가<i>.reg</i></div>
<div class="t fd" style="left:446.00px;top:234.51px;color:#6d6d6d"><i>2021-06-19</i> 오후 <i>9:25</i></div>
<svg style="left:218.30px;top:243.10px" width="9.8" height="11.4" viewBox="0 0 19 22"><path d="M2.600 .8h10.400l5 4.800V21.200H2.600z" fill="#fff" stroke="#a8a8a8" stroke-width="1.300"/><path d="M13 .8v4.800h5" fill="#f4f4f4" stroke="#a8a8a8" stroke-width="1"/><path d="M0 9.600h8l2-2.400 3.600 1.600 1 3.600-2.200 2 .2 4.600H0z" fill="#0f86d0"/><path d="M8.400 9.400l2-2 2.600 1.200.8 2.800-2 1.800-1.600-2z" fill="#2aa4e6"/><path d="M8.600 10.400l1.800 1.800M11.800 13.200l1.400 1.600" stroke="#e8f6fe" stroke-width="1.300"/></svg>
<div class="t" style="left:231.90px;top:249.20px;color:#000">관리자 권한 얻기<i>_</i>삭제<i>.reg</i></div>
<div class="t fd" style="left:446.00px;top:249.20px;color:#6d6d6d"><i>2021-06-19</i> 오후 <i>11:11</i></div>
<svg style="left:218.30px;top:257.79px" width="9.8" height="11.4" viewBox="0 0 19 22"><path d="M2.600 .8h10.400l5 4.800V21.200H2.600z" fill="#fff" stroke="#a8a8a8" stroke-width="1.300"/><path d="M13 .8v4.800h5" fill="#f4f4f4" stroke="#a8a8a8" stroke-width="1"/><path d="M0 9.600h8l2-2.400 3.600 1.600 1 3.600-2.200 2 .2 4.600H0z" fill="#0f86d0"/><path d="M8.400 9.400l2-2 2.600 1.200.8 2.800-2 1.800-1.600-2z" fill="#2aa4e6"/><path d="M8.600 10.400l1.800 1.800M11.800 13.200l1.400 1.600" stroke="#e8f6fe" stroke-width="1.300"/></svg>
<div class="t" style="left:231.90px;top:263.89px;color:#000">관리자 권한 얻기<i>_</i>추가<i>.reg</i></div>
<div class="t fd" style="left:446.00px;top:263.89px;color:#6d6d6d"><i>2021-06-19</i> 오후 <i>11:10</i></div>
<svg style="left:218.30px;top:272.48px" width="9.8" height="11.4" viewBox="0 0 19 22"><path d="M2.600 .8h10.400l5 4.800V21.200H2.600z" fill="#fff" stroke="#a8a8a8" stroke-width="1.300"/><path d="M13 .8v4.800h5" fill="#f4f4f4" stroke="#a8a8a8" stroke-width="1"/><path d="M0 9.600h8l2-2.400 3.600 1.600 1 3.600-2.200 2 .2 4.600H0z" fill="#0f86d0"/><path d="M8.400 9.400l2-2 2.600 1.200.8 2.800-2 1.800-1.600-2z" fill="#2aa4e6"/><path d="M8.600 10.400l1.800 1.800M11.800 13.200l1.400 1.600" stroke="#e8f6fe" stroke-width="1.300"/></svg>
<div class="t" style="left:231.90px;top:278.58px;color:#000">관리자 권한 얻기<i>02_</i>삭제<i>.reg</i></div>
<div class="t fd" style="left:446.00px;top:278.58px;color:#6d6d6d"><i>2021-08-16</i> 오전 <i>10:27</i></div>
<svg style="left:218.30px;top:287.17px" width="9.8" height="11.4" viewBox="0 0 19 22"><path d="M2.600 .8h10.400l5 4.800V21.200H2.600z" fill="#fff" stroke="#a8a8a8" stroke-width="1.300"/><path d="M13 .8v4.800h5" fill="#f4f4f4" stroke="#a8a8a8" stroke-width="1"/><path d="M0 9.600h8l2-2.400 3.600 1.600 1 3.600-2.200 2 .2 4.600H0z" fill="#0f86d0"/><path d="M8.400 9.400l2-2 2.600 1.200.8 2.800-2 1.800-1.600-2z" fill="#2aa4e6"/><path d="M8.600 10.400l1.800 1.800M11.800 13.200l1.400 1.600" stroke="#e8f6fe" stroke-width="1.300"/></svg>
<div class="t" style="left:231.90px;top:293.27px;color:#000">관리자 권한 얻기<i>02_</i>추가<i>.reg</i></div>
<div class="t fd" style="left:446.00px;top:293.27px;color:#6d6d6d"><i>2021-08-16</i> 오전 <i>10:27</i></div>
<svg style="left:218.30px;top:301.86px" width="9.8" height="11.4" viewBox="0 0 19 22"><path d="M2.600 .8h10.400l5 4.800V21.200H2.600z" fill="#fff" stroke="#a8a8a8" stroke-width="1.300"/><path d="M13 .8v4.800h5" fill="#f4f4f4" stroke="#a8a8a8" stroke-width="1"/><path d="M0 9.600h8l2-2.400 3.600 1.600 1 3.600-2.200 2 .2 4.600H0z" fill="#0f86d0"/><path d="M8.400 9.400l2-2 2.600 1.200.8 2.800-2 1.800-1.600-2z" fill="#2aa4e6"/><path d="M8.600 10.400l1.800 1.800M11.800 13.200l1.400 1.600" stroke="#e8f6fe" stroke-width="1.300"/></svg>
<div class="t" style="left:231.90px;top:307.96px;color:#000">디스크 정리<i>_</i>삭제<i>.reg</i></div>
<div class="t fd" style="left:446.00px;top:307.96px;color:#6d6d6d"><i>2021-06-27</i> 오전 <i>7:45</i></div>
<svg style="left:218.30px;top:316.55px" width="9.8" height="11.4" viewBox="0 0 19 22"><path d="M2.600 .8h10.400l5 4.800V21.200H2.600z" fill="#fff" stroke="#a8a8a8" stroke-width="1.300"/><path d="M13 .8v4.800h5" fill="#f4f4f4" stroke="#a8a8a8" stroke-width="1"/><path d="M0 9.600h8l2-2.400 3.600 1.600 1 3.600-2.200 2 .2 4.600H0z" fill="#0f86d0"/><path d="M8.400 9.400l2-2 2.600 1.200.8 2.800-2 1.800-1.600-2z" fill="#2aa4e6"/><path d="M8.600 10.400l1.800 1.800M11.800 13.200l1.400 1.600" stroke="#e8f6fe" stroke-width="1.300"/></svg>
<div class="t" style="left:231.90px;top:322.65px;color:#000">디스크 정리<i>_</i>추가<i>.reg</i></div>
<div class="t fd" style="left:446.00px;top:322.65px;color:#6d6d6d"><i>2021-06-27</i> 오전 <i>7:44</i></div>
<svg style="left:218.30px;top:331.24px" width="9.8" height="11.4" viewBox="0 0 19 22"><path d="M2.600 .8h10.400l5 4.800V21.200H2.600z" fill="#fff" stroke="#a8a8a8" stroke-width="1.300"/><path d="M13 .8v4.800h5" fill="#f4f4f4" stroke="#a8a8a8" stroke-width="1"/><path d="M0 9.600h8l2-2.400 3.600 1.600 1 3.600-2.200 2 .2 4.600H0z" fill="#0f86d0"/><path d="M8.400 9.400l2-2 2.600 1.200.8 2.800-2 1.800-1.600-2z" fill="#2aa4e6"/><path d="M8.600 10.400l1.800 1.800M11.800 13.200l1.400 1.600" stroke="#e8f6fe" stroke-width="1.300"/></svg>
<div class="t" style="left:231.90px;top:337.34px;color:#000">모든 작업<i>(God Mode)_</i>삭제<i>.reg</i></div>
<div class="t fd" style="left:446.00px;top:337.34px;color:#6d6d6d"><i>2021-06-12</i> 오후 <i>6:21</i></div>
<svg style="left:218.30px;top:345.93px" width="9.8" height="11.4" viewBox="0 0 19 22"><path d="M2.600 .8h10.400l5 4.800V21.200H2.600z" fill="#fff" stroke="#a8a8a8" stroke-width="1.300"/><path d="M13 .8v4.800h5" fill="#f4f4f4" stroke="#a8a8a8" stroke-width="1"/><path d="M0 9.600h8l2-2.400 3.600 1.600 1 3.600-2.200 2 .2 4.600H0z" fill="#0f86d0"/><path d="M8.400 9.400l2-2 2.600 1.200.8 2.800-2 1.800-1.600-2z" fill="#2aa4e6"/><path d="M8.600 10.400l1.800 1.800M11.800 13.200l1.400 1.600" stroke="#e8f6fe" stroke-width="1.300"/></svg>
<div class="t" style="left:231.90px;top:352.03px;color:#000">모든 작업<i>(God Mode)_</i>추가<i>.reg</i></div>
<div class="t fd" style="left:446.00px;top:352.03px;color:#6d6d6d"><i>2021-06-19</i> 오후 <i>9:53</i></div>
<svg style="left:218.30px;top:360.62px" width="9.8" height="11.4" viewBox="0 0 19 22"><path d="M2.600 .8h10.400l5 4.800V21.200H2.600z" fill="#fff" stroke="#a8a8a8" stroke-width="1.300"/><path d="M13 .8v4.800h5" fill="#f4f4f4" stroke="#a8a8a8" stroke-width="1"/><path d="M0 9.600h8l2-2.400 3.600 1.600 1 3.600-2.200 2 .2 4.600H0z" fill="#0f86d0"/><path d="M8.400 9.400l2-2 2.600 1.200.8 2.800-2 1.800-1.600-2z" fill="#2aa4e6"/><path d="M8.600 10.400l1.800 1.800M11.800 13.200l1.400 1.600" stroke="#e8f6fe" stroke-width="1.300"/></svg>
<div class="t" style="left:231.90px;top:366.72px;color:#000">무응답 프로세스 종료<i>_</i>삭제<i>.reg</i></div>
<div class="t fd" style="left:446.00px;top:366.72px;color:#6d6d6d"><i>2021-06-19</i> 오후 <i>10:00</i></div>
<svg style="left:218.30px;top:375.31px" width="9.8" height="11.4" viewBox="0 0 19 22"><path d="M2.600 .8h10.400l5 4.800V21.200H2.600z" fill="#fff" stroke="#a8a8a8" stroke-width="1.300"/><path d="M13 .8v4.800h5" fill="#f4f4f4" stroke="#a8a8a8" stroke-width="1"/><path d="M0 9.600h8l2-2.400 3.600 1.600 1 3.600-2.200 2 .2 4.600H0z" fill="#0f86d0"/><path d="M8.400 9.400l2-2 2.600 1.200.8 2.800-2 1.800-1.600-2z" fill="#2aa4e6"/><path d="M8.600 10.400l1.800 1.800M11.800 13.200l1.400 1.600" stroke="#e8f6fe" stroke-width="1.300"/></svg>
<div class="t" style="left:231.90px;top:381.41px;color:#000">무응답 프로세스 종료<i>_</i>추가<i>.reg</i></div>
<div class="t fd" style="left:446.00px;top:381.41px;color:#6d6d6d"><i>2021-06-19</i> 오후 <i>9:59</i></div>
<svg style="left:218.30px;top:390.00px" width="9.8" height="11.4" viewBox="0 0 19 22"><path d="M2.600 .8h10.400l5 4.800V21.200H2.600z" fill="#fff" stroke="#a8a8a8" stroke-width="1.300"/><path d="M13 .8v4.800h5" fill="#f4f4f4" stroke="#a8a8a8" stroke-width="1"/><path d="M0 9.600h8l2-2.400 3.600 1.600 1 3.600-2.200 2 .2 4.600H0z" fill="#0f86d0"/><path d="M8.400 9.400l2-2 2.600 1.200.8 2.800-2 1.800-1.600-2z" fill="#2aa4e6"/><path d="M8.600 10.400l1.800 1.800M11.800 13.200l1.400 1.600" stroke="#e8f6fe" stroke-width="1.300"/></svg>
<div class="t" style="left:231.90px;top:396.10px;color:#000">바로가기에 고정<i>_</i>삭제<i>.reg</i></div>
<svg style="left:218.30px;top:404.69px" width="9.8" height="11.4" viewBox="0 0 19 22"><path d="M2.600 .8h10.400l5 4.800V21.200H2.600z" fill="#fff" stroke="#a8a8a8" stroke-width="1.300"/><path d="M13 .8v4.800h5" fill="#f4f4f4" stroke="#a8a8a8" stroke-width="1"/><path d="M0 9.600h8l2-2.400 3.600 1.600 1 3.600-2.200 2 .2 4.600H0z" fill="#0f86d0"/><path d="M8.400 9.400l2-2 2.600 1.200.8 2.800-2 1.800-1.600-2z" fill="#2aa4e6"/><path d="M8.600 10.400l1.800 1.800M11.800 13.200l1.400 1.600" stroke="#e8f6fe" stroke-width="1.300"/></svg>
<div class="t" style="left:231.90px;top:410.79px;color:#000">바로가기에 고정<i>_</i>추가<i>.reg</i></div>
<svg style="left:218.30px;top:419.38px" width="9.8" height="11.4" viewBox="0 0 19 22"><path d="M2.600 .8h10.400l5 4.800V21.200H2.600z" fill="#fff" stroke="#a8a8a8" stroke-width="1.300"/><path d="M13 .8v4.800h5" fill="#f4f4f4" stroke="#a8a8a8" stroke-width="1"/><path d="M0 9.600h8l2-2.400 3.600 1.600 1 3.600-2.200 2 .2 4.600H0z" fill="#0f86d0"/><path d="M8.400 9.400l2-2 2.600 1.200.8 2.800-2 1.800-1.600-2z" fill="#2aa4e6"/><path d="M8.600 10.400l1.800 1.800M11.800 13.200l1.400 1.600" stroke="#e8f6fe" stroke-width="1.300"/></svg>
<div class="t" style="left:231.90px;top:425.48px;color:#000">바탕화면 이미지 위치<i>_</i>삭제<i>.reg</i></div>
<svg style="left:218.30px;top:434.07px" width="9.8" height="11.4" viewBox="0 0 19 22"><path d="M2.600 .8h10.400l5 4.800V21.200H2.600z" fill="#fff" stroke="#a8a8a8" stroke-width="1.300"/><path d="M13 .8v4.800h5" fill="#f4f4f4" stroke="#a8a8a8" stroke-width="1"/><path d="M0 9.600h8l2-2.400 3.600 1.600 1 3.600-2.200 2 .2 4.600H0z" fill="#0f86d0"/><path d="M8.400 9.400l2-2 2.600 1.200.8 2.800-2 1.800-1.600-2z" fill="#2aa4e6"/><path d="M8.600 10.400l1.800 1.800M11.800 13.200l1.400 1.600" stroke="#e8f6fe" stroke-width="1.300"/></svg>
<div class="t" style="left:231.90px;top:440.17px;color:#000">바탕화면 이미지 위치<i>_</i>추가<i>.reg</i></div>
<svg style="left:218.30px;top:448.76px" width="9.8" height="11.4" viewBox="0 0 19 22"><path d="M2.600 .8h10.400l5 4.800V21.200H2.600z" fill="#fff" stroke="#a8a8a8" stroke-width="1.300"/><path d="M13 .8v4.800h5" fill="#f4f4f4" stroke="#a8a8a8" stroke-width="1"/><path d="M0 9.600h8l2-2.400 3.600 1.600 1 3.600-2.200 2 .2 4.600H0z" fill="#0f86d0"/><path d="M8.400 9.400l2-2 2.600 1.200.8 2.800-2 1.800-1.600-2z" fill="#2aa4e6"/><path d="M8.600 10.400l1.800 1.800M11.800 13.200l1.400 1.600" stroke="#e8f6fe" stroke-width="1.300"/></svg>
<div class="t" style="left:231.90px;top:454.86px;color:#000">사용자 계정<i>_</i>삭제<i>.reg</i></div>
<svg style="left:218.30px;top:463.45px" width="9.8" height="11.4" viewBox="0 0 19 22"><path d="M2.600 .8h10.400l5 4.800V21.200H2.600z" fill="#fff" stroke="#a8a8a8" stroke-width="1.300"/><path d="M13 .8v4.800h5" fill="#f4f4f4" stroke="#a8a8a8" stroke-width="1"/><path d="M0 9.600h8l2-2.400 3.600 1.600 1 3.600-2.200 2 .2 4.600H0z" fill="#0f86d0"/><path d="M8.400 9.400l2-2 2.600 1.200.8 2.800-2 1.800-1.600-2z" fill="#2aa4e6"/><path d="M8.600 10.400l1.800 1.800M11.800 13.200l1.400 1.600" stroke="#e8f6fe" stroke-width="1.300"/></svg>
<div class="t" style="left:231.90px;top:469.55px;color:#000">사용자 계정<i>_</i>추가<i>.reg</i></div>
<svg style="left:218.30px;top:478.14px" width="9.8" height="11.4" viewBox="0 0 19 22"><path d="M2.600 .8h10.400l5 4.800V21.200H2.600z" fill="#fff" stroke="#a8a8a8" stroke-width="1.300"/><path d="M13 .8v4.800h5" fill="#f4f4f4" stroke="#a8a8a8" stroke-width="1"/><path d="M0 9.600h8l2-2.400 3.600 1.600 1 3.600-2.200 2 .2 4.600H0z" fill="#0f86d0"/><path d="M8.400 9.400l2-2 2.600 1.200.8 2.800-2 1.800-1.600-2z" fill="#2aa4e6"/><path d="M8.600 10.400l1.800 1.800M11.800 13.200l1.400 1.600" stroke="#e8f6fe" stroke-width="1.300"/></svg>
<div class="t" style="left:231.90px;top:484.24px;color:#000">새 탭에서 열기<i>_</i>삭제<i>.reg</i></div>
<svg style="left:218.30px;top:492.83px" width="9.8" height="11.4" viewBox="0 0 19 22"><path d="M2.600 .8h10.400l5 4.800V21.200H2.600z" fill="#fff" stroke="#a8a8a8" stroke-width="1.300"/><path d="M13 .8v4.800h5" fill="#f4f4f4" stroke="#a8a8a8" stroke-width="1"/><path d="M0 9.600h8l2-2.400 3.600 1.600 1 3.600-2.200 2 .2 4.600H0z" fill="#0f86d0"/><path d="M8.400 9.400l2-2 2.600 1.200.8 2.800-2 1.800-1.600-2z" fill="#2aa4e6"/><path d="M8.600 10.400l1.800 1.800M11.800 13.200l1.400 1.600" stroke="#e8f6fe" stroke-width="1.300"/></svg>
<div class="t" style="left:231.90px;top:498.93px;color:#000">새 탭에서 열기<i>_</i>추가<i>.reg</i></div>
<svg style="left:218.30px;top:507.52px" width="9.8" height="11.4" viewBox="0 0 19 22"><path d="M2.600 .8h10.400l5 4.800V21.200H2.600z" fill="#fff" stroke="#a8a8a8" stroke-width="1.300"/><path d="M13 .8v4.800h5" fill="#f4f4f4" stroke="#a8a8a8" stroke-width="1"/><path d="M0 9.600h8l2-2.400 3.600 1.600 1 3.600-2.200 2 .2 4.600H0z" fill="#0f86d0"/><path d="M8.400 9.400l2-2 2.600 1.200.8 2.800-2 1.800-1.600-2z" fill="#2aa4e6"/><path d="M8.600 10.400l1.800 1.800M11.800 13.200l1.400 1.600" stroke="#e8f6fe" stroke-width="1.300"/></svg>
<div class="t" style="left:231.90px;top:513.62px;color:#000">시스템 속성<i>(</i>클래식<i>)_</i>삭제<i>.reg</i></div>
<svg style="left:218.30px;top:522.21px" width="9.8" height="11.4" viewBox="0 0 19 22"><path d="M2.600 .8h10.400l5 4.800V21.200H2.600z" fill="#fff" stroke="#a8a8a8" stroke-width="1.300"/><path d="M13 .8v4.800h5" fill="#f4f4f4" stroke="#a8a8a8" stroke-width="1"/><path d="M0 9.600h8l2-2.400 3.600 1.600 1 3.600-2.200 2 .2 4.600H0z" fill="#0f86d0"/><path d="M8.400 9.400l2-2 2.600 1.200.8 2.800-2 1.800-1.600-2z" fill="#2aa4e6"/><path d="M8.600 10.400l1.800 1.800M11.800 13.200l1.400 1.600" stroke="#e8f6fe" stroke-width="1.300"/></svg>
<div class="t" style="left:231.90px;top:528.31px;color:#000">시스템 속성<i>(</i>클래식<i>)_</i>추가<i>.reg</i></div>
<svg style="left:218.30px;top:536.90px" width="9.8" height="11.4" viewBox="0 0 19 22"><path d="M2.600 .8h10.400l5 4.800V21.200H2.600z" fill="#fff" stroke="#a8a8a8" stroke-width="1.300"/><path d="M13 .8v4.800h5" fill="#f4f4f4" stroke="#a8a8a8" stroke-width="1"/><path d="M0 9.600h8l2-2.400 3.600 1.600 1 3.600-2.200 2 .2 4.600H0z" fill="#0f86d0"/><path d="M8.400 9.400l2-2 2.600 1.200.8 2.800-2 1.800-1.600-2z" fill="#2aa4e6"/><path d="M8.600 10.400l1.800 1.800M11.800 13.200l1.400 1.600" stroke="#e8f6fe" stroke-width="1.300"/></svg>
<div class="t" style="left:231.90px;top:543.00px;color:#000">안전 모드<i>_</i>삭제<i>.reg</i></div>
<svg style="left:218.30px;top:551.59px" width="9.8" height="11.4" viewBox="0 0 19 22"><path d="M2.600 .8h10.400l5 4.800V21.200H2.600z" fill="#fff" stroke="#a8a8a8" stroke-width="1.300"/><path d="M13 .8v4.800h5" fill="#f4f4f4" stroke="#a8a8a8" stroke-width="1"/><path d="M0 9.600h8l2-2.400 3.600 1.600 1 3.600-2.200 2 .2 4.600H0z" fill="#0f86d0"/><path d="M8.400 9.400l2-2 2.600 1.200.8 2.800-2 1.800-1.600-2z" fill="#2aa4e6"/><path d="M8.600 10.400l1.800 1.800M11.800 13.200l1.400 1.600" stroke="#e8f6fe" stroke-width="1.300"/></svg>
<div class="t" style="left:231.90px;top:557.69px;color:#000">안전 모드<i>_</i>추가<i>.reg</i></div>
<svg style="left:218.30px;top:566.28px" width="9.8" height="11.4" viewBox="0 0 19 22"><path d="M2.600 .8h10.400l5 4.800V21.200H2.600z" fill="#fff" stroke="#a8a8a8" stroke-width="1.300"/><path d="M13 .8v4.800h5" fill="#f4f4f4" stroke="#a8a8a8" stroke-width="1"/><path d="M0 9.600h8l2-2.400 3.600 1.600 1 3.600-2.200 2 .2 4.600H0z" fill="#0f86d0"/><path d="M8.400 9.400l2-2 2.600 1.200.8 2.800-2 1.800-1.600-2z" fill="#2aa4e6"/><path d="M8.600 10.400l1.800 1.800M11.800 13.200l1.400 1.600" stroke="#e8f6fe" stroke-width="1.300"/></svg>
<div class="t" style="left:231.90px;top:572.38px;color:#000">여기서 <i>Powershell</i> 창 열기<i>(</i>관리자<i>)_</i>삭제<i>.reg</i></div>
<svg style="left:218.30px;top:580.97px" width="9.8" height="11.4" viewBox="0 0 19 22"><path d="M2.600 .8h10.400l5 4.800V21.200H2.600z" fill="#fff" stroke="#a8a8a8" stroke-width="1.300"/><path d="M13 .8v4.800h5" fill="#f4f4f4" stroke="#a8a8a8" stroke-width="1"/><path d="M0 9.600h8l2-2.400 3.600 1.600 1 3.600-2.200 2 .2 4.600H0z" fill="#0f86d0"/><path d="M8.400 9.400l2-2 2.600 1.200.8 2.800-2 1.800-1.600-2z" fill="#2aa4e6"/><path d="M8.600 10.400l1.800 1.800M11.800 13.200l1.400 1.600" stroke="#e8f6fe" stroke-width="1.300"/></svg>
<div class="t" style="left:231.90px;top:587.07px;color:#000">여기서 <i>Powershell</i> 창 열기<i>(</i>관리자<i>)_</i>추가<i>.reg</i></div>
<svg style="left:218.30px;top:595.66px" width="9.8" height="11.4" viewBox="0 0 19 22"><path d="M2.600 .8h10.400l5 4.800V21.200H2.600z" fill="#fff" stroke="#a8a8a8" stroke-width="1.300"/><path d="M13 .8v4.800h5" fill="#f4f4f4" stroke="#a8a8a8" stroke-width="1"/><path d="M0 9.600h8l2-2.400 3.600 1.600 1 3.600-2.200 2 .2 4.600H0z" fill="#0f86d0"/><path d="M8.400 9.400l2-2 2.600 1.200.8 2.800-2 1.800-1.600-2z" fill="#2aa4e6"/><path d="M8.600 10.400l1.800 1.800M11.800 13.200l1.400 1.600" stroke="#e8f6fe" stroke-width="1.300"/></svg>
<div class="t" style="left:231.90px;top:601.76px;color:#000">여기서 명령 창 열기<i>_</i>삭제<i>.reg</i></div>
<svg style="left:218.30px;top:610.35px" width="9.8" height="11.4" viewBox="0 0 19 22"><path d="M2.600 .8h10.400l5 4.800V21.200H2.600z" fill="#fff" stroke="#a8a8a8" stroke-width="1.300"/><path d="M13 .8v4.800h5" fill="#f4f4f4" stroke="#a8a8a8" stroke-width="1"/><path d="M0 9.600h8l2-2.400 3.600 1.600 1 3.600-2.200 2 .2 4.600H0z" fill="#0f86d0"/><path d="M8.400 9.400l2-2 2.600 1.200.8 2.800-2 1.800-1.600-2z" fill="#2aa4e6"/><path d="M8.600 10.400l1.800 1.800M11.800 13.200l1.400 1.600" stroke="#e8f6fe" stroke-width="1.300"/></svg>
<div class="t" style="left:231.90px;top:616.45px;color:#000">여기서 명령 창 열기<i>_</i>추가<i>.reg</i></div>
<div class="t fd" style="left:446.00px;top:616.45px;color:#6d6d6d"><i>2021-08-16</i> 오전 <i>10:09</i></div>
<svg style="left:218.30px;top:625.04px" width="9.8" height="11.4" viewBox="0 0 19 22"><path d="M2.600 .8h10.400l5 4.800V21.200H2.600z" fill="#fff" stroke="#a8a8a8" stroke-width="1.300"/><path d="M13 .8v4.800h5" fill="#f4f4f4" stroke="#a8a8a8" stroke-width="1"/><path d="M0 9.600h8l2-2.400 3.600 1.600 1 3.600-2.200 2 .2 4.600H0z" fill="#0f86d0"/><path d="M8.400 9.400l2-2 2.600 1.200.8 2.800-2 1.800-1.600-2z" fill="#2aa4e6"/><path d="M8.600 10.400l1.800 1.800M11.800 13.200l1.400 1.600" stroke="#e8f6fe" stroke-width="1.300"/></svg>
<div class="t" style="left:231.90px;top:631.14px;color:#000">여기서 명령 프롬프트 열기<i>(</i>관리자<i>)_</i>삭제<i>.reg</i></div>
<div class="t fd" style="left:446.00px;top:631.14px;color:#6d6d6d"><i>2021-06-20</i> 오전 <i>10:17</i></div>
<svg style="left:218.30px;top:639.73px" width="9.8" height="11.4" viewBox="0 0 19 22"><path d="M2.600 .8h10.400l5 4.800V21.200H2.600z" fill="#fff" stroke="#a8a8a8" stroke-width="1.300"/><path d="M13 .8v4.800h5" fill="#f4f4f4" stroke="#a8a8a8" stroke-width="1"/><path d="M0 9.600h8l2-2.400 3.600 1.600 1 3.600-2.200 2 .2 4.600H0z" fill="#0f86d0"/><path d="M8.400 9.400l2-2 2.600 1.200.8 2.800-2 1.800-1.600-2z" fill="#2aa4e6"/><path d="M8.600 10.400l1.800 1.800M11.800 13.200l1.400 1.600" stroke="#e8f6fe" stroke-width="1.300"/></svg>
<div class="t" style="left:231.90px;top:645.83px;color:#000">여기서 명령 프롬프트 열기<i>(</i>관리자<i>)_</i>추가<i>.reg</i></div>
<div class="t fd" style="left:446.00px;top:645.83px;color:#6d6d6d"><i>2021-06-20</i> 오전 <i>10:16</i></div>
<svg style="left:218.30px;top:654.42px" width="9.8" height="11.4" viewBox="0 0 19 22"><path d="M2.600 .8h10.400l5 4.800V21.200H2.600z" fill="#fff" stroke="#a8a8a8" stroke-width="1.300"/><path d="M13 .8v4.800h5" fill="#f4f4f4" stroke="#a8a8a8" stroke-width="1"/><path d="M0 9.600h8l2-2.400 3.600 1.600 1 3.600-2.200 2 .2 4.600H0z" fill="#0f86d0"/><path d="M8.400 9.400l2-2 2.600 1.200.8 2.800-2 1.800-1.600-2z" fill="#2aa4e6"/><path d="M8.600 10.400l1.800 1.800M11.800 13.200l1.400 1.600" stroke="#e8f6fe" stroke-width="1.300"/></svg>
<div class="t" style="left:231.90px;top:660.52px;color:#000">여기서 명령 프롬프트 열기<i>01_</i>삭제<i>.reg</i></div>
<div class="t fd" style="left:446.00px;top:660.52px;color:#6d6d6d"><i>2021-06-20</i> 오전 <i>10:17</i></div>
<svg style="left:218.30px;top:669.11px" width="9.8" height="11.4" viewBox="0 0 19 22"><path d="M2.600 .8h10.400l5 4.800V21.200H2.600z" fill="#fff" stroke="#a8a8a8" stroke-width="1.300"/><path d="M13 .8v4.800h5" fill="#f4f4f4" stroke="#a8a8a8" stroke-width="1"/><path d="M0 9.600h8l2-2.400 3.600 1.600 1 3.600-2.200 2 .2 4.600H0z" fill="#0f86d0"/><path d="M8.400 9.400l2-2 2.600 1.200.8 2.800-2 1.800-1.600-2z" fill="#2aa4e6"/><path d="M8.600 10.400l1.800 1.800M11.800 13.200l1.400 1.600" stroke="#e8f6fe" stroke-width="1.300"/></svg>
<div class="t" style="left:231.90px;top:675.21px;color:#000">여기서 명령 프롬프트 열기<i>01_</i>추가<i>.reg</i></div>
<div class="t fd" style="left:446.00px;top:675.21px;color:#6d6d6d"><i>2021-06-20</i> 오전 <i>10:18</i></div>
<svg style="left:218.30px;top:683.80px" width="9.8" height="11.4" viewBox="0 0 19 22"><path d="M2.600 .8h10.400l5 4.800V21.200H2.600z" fill="#fff" stroke="#a8a8a8" stroke-width="1.300"/><path d="M13 .8v4.800h5" fill="#f4f4f4" stroke="#a8a8a8" stroke-width="1"/><path d="M0 9.600h8l2-2.400 3.600 1.600 1 3.600-2.200 2 .2 4.600H0z" fill="#0f86d0"/><path d="M8.400 9.400l2-2 2.600 1.200.8 2.800-2 1.800-1.600-2z" fill="#2aa4e6"/><path d="M8.600 10.400l1.800 1.800M11.800 13.200l1.400 1.600" stroke="#e8f6fe" stroke-width="1.300"/></svg>
<div class="t" style="left:231.90px;top:689.90px;color:#000">여기서 명령 프롬프트 열기<i>02_</i>삭제<i>.reg</i></div>
<div class="t fd" style="left:446.00px;top:689.90px;color:#6d6d6d"><i>2021-06-27</i> 오전 <i>8:02</i></div>
<svg style="left:218.30px;top:698.49px" width="9.8" height="11.4" viewBox="0 0 19 22"><path d="M2.600 .8h10.400l5 4.800V21.200H2.600z" fill="#fff" stroke="#a8a8a8" stroke-width="1.300"/><path d="M13 .8v4.800h5" fill="#f4f4f4" stroke="#a8a8a8" stroke-width="1"/><path d="M0 9.600h8l2-2.400 3.600 1.600 1 3.600-2.200 2 .2 4.600H0z" fill="#0f86d0"/><path d="M8.400 9.400l2-2 2.600 1.200.8 2.800-2 1.800-1.600-2z" fill="#2aa4e6"/><path d="M8.600 10.400l1.800 1.800M11.800 13.200l1.400 1.600" stroke="#e8f6fe" stroke-width="1.300"/></svg>
<div class="t" style="left:231.90px;top:704.59px;color:#000">여기서 명령 프롬프트 열기<i>02_</i>추가<i>.reg</i></div>
<div class="t fd" style="left:446.00px;top:704.59px;color:#6d6d6d"><i>2021-06-27</i> 오전 <i>7:59</i></div>
<svg style="left:218.30px;top:713.18px" width="9.8" height="11.4" viewBox="0 0 19 22"><path d="M2.600 .8h10.400l5 4.800V21.200H2.600z" fill="#fff" stroke="#a8a8a8" stroke-width="1.300"/><path d="M13 .8v4.800h5" fill="#f4f4f4" stroke="#a8a8a8" stroke-width="1"/><path d="M0 9.600h8l2-2.400 3.600 1.600 1 3.600-2.200 2 .2 4.600H0z" fill="#0f86d0"/><path d="M8.400 9.400l2-2 2.600 1.200.8 2.800-2 1.800-1.600-2z" fill="#2aa4e6"/><path d="M8.600 10.400l1.800 1.800M11.800 13.200l1.400 1.600" stroke="#e8f6fe" stroke-width="1.300"/></svg>
<div class="t" style="left:231.90px;top:719.28px;color:#000">전원<i>(</i>종료<i>)_</i>삭제<i>.reg</i></div>
<div class="t fd" style="left:446.00px;top:719.28px;color:#6d6d6d"><i>2021-06-19</i> 오후 <i>11:00</i></div>
<svg style="left:218.30px;top:727.87px" width="9.8" height="11.4" viewBox="0 0 19 22"><path d="M2.600 .8h10.400l5 4.800V21.200H2.600z" fill="#fff" stroke="#a8a8a8" stroke-width="1.300"/><path d="M13 .8v4.800h5" fill="#f4f4f4" stroke="#a8a8a8" stroke-width="1"/><path d="M0 9.600h8l2-2.400 3.600 1.600 1 3.600-2.200 2 .2 4.600H0z" fill="#0f86d0"/><path d="M8.400 9.400l2-2 2.600 1.200.8 2.800-2 1.800-1.600-2z" fill="#2aa4e6"/><path d="M8.600 10.400l1.800 1.800M11.800 13.200l1.400 1.600" stroke="#e8f6fe" stroke-width="1.300"/></svg>
<div class="t" style="left:231.90px;top:733.97px;color:#000">전원<i>(</i>종료<i>)_</i>추가<i>.reg</i></div>
<div class="t fd" style="left:446.00px;top:733.97px;color:#6d6d6d"><i>2021-06-19</i> 오후 <i>10:58</i></div>
<svg style="left:218.30px;top:742.56px" width="9.8" height="11.4" viewBox="0 0 19 22"><path d="M2.600 .8h10.400l5 4.800V21.200H2.600z" fill="#fff" stroke="#a8a8a8" stroke-width="1.300"/><path d="M13 .8v4.800h5" fill="#f4f4f4" stroke="#a8a8a8" stroke-width="1"/><path d="M0 9.600h8l2-2.400 3.600 1.600 1 3.600-2.200 2 .2 4.600H0z" fill="#0f86d0"/><path d="M8.400 9.400l2-2 2.600 1.200.8 2.800-2 1.800-1.600-2z" fill="#2aa4e6"/><path d="M8.600 10.400l1.800 1.800M11.800 13.200l1.400 1.600" stroke="#e8f6fe" stroke-width="1.300"/></svg>
<div class="t" style="left:231.90px;top:748.66px;color:#000">제어판<i>_</i>삭제<i>.reg</i></div>
<div class="t fd" style="left:446.00px;top:748.66px;color:#6d6d6d"><i>2021-06-12</i> 오후 <i>1:50</i></div>
<svg style="left:218.30px;top:757.25px" width="9.8" height="11.4" viewBox="0 0 19 22"><path d="M2.600 .8h10.400l5 4.800V21.200H2.600z" fill="#fff" stroke="#a8a8a8" stroke-width="1.300"/><path d="M13 .8v4.800h5" fill="#f4f4f4" stroke="#a8a8a8" stroke-width="1"/><path d="M0 9.600h8l2-2.400 3.600 1.600 1 3.600-2.200 2 .2 4.600H0z" fill="#0f86d0"/><path d="M8.400 9.400l2-2 2.600 1.200.8 2.800-2 1.800-1.600-2z" fill="#2aa4e6"/><path d="M8.600 10.400l1.800 1.800M11.800 13.200l1.400 1.600" stroke="#e8f6fe" stroke-width="1.300"/></svg>
<div class="t" style="left:231.90px;top:763.35px;color:#000">제어판<i>_</i>추가<i>.reg</i></div>
<div class="t fd" style="left:446.00px;top:763.35px;color:#6d6d6d"><i>2021-06-19</i> 오후 <i>10:16</i></div>
<svg style="left:218.30px;top:771.94px" width="9.8" height="11.4" viewBox="0 0 19 22"><path d="M2.600 .8h10.400l5 4.800V21.200H2.600z" fill="#fff" stroke="#a8a8a8" stroke-width="1.300"/><path d="M13 .8v4.800h5" fill="#f4f4f4" stroke="#a8a8a8" stroke-width="1"/><path d="M0 9.600h8l2-2.400 3.600 1.600 1 3.600-2.200 2 .2 4.600H0z" fill="#0f86d0"/><path d="M8.400 9.400l2-2 2.600 1.200.8 2.800-2 1.800-1.600-2z" fill="#2aa4e6"/><path d="M8.600 10.400l1.800 1.800M11.800 13.200l1.400 1.600" stroke="#e8f6fe" stroke-width="1.300"/></svg>
<div class="t" style="left:231.90px;top:778.04px;color:#000">컴팩트<i>(Compact) OS</i> 압축<i>_</i>삭제<i>.reg</i></div>
<div class="t fd" style="left:446.00px;top:778.04px;color:#6d6d6d"><i>2021-06-12</i> 오후 <i>1:14</i></div>
<svg style="left:218.30px;top:786.63px" width="9.8" height="11.4" viewBox="0 0 19 22"><path d="M2.600 .8h10.400l5 4.800V21.200H2.600z" fill="#fff" stroke="#a8a8a8" stroke-width="1.300"/><path d="M13 .8v4.800h5" fill="#f4f4f4" stroke="#a8a8a8" stroke-width="1"/><path d="M0 9.600h8l2-2.400 3.600 1.600 1 3.600-2.200 2 .2 4.600H0z" fill="#0f86d0"/><path d="M8.400 9.400l2-2 2.600 1.200.8 2.800-2 1.800-1.600-2z" fill="#2aa4e6"/><path d="M8.600 10.400l1.800 1.800M11.800 13.200l1.400 1.600" stroke="#e8f6fe" stroke-width="1.300"/></svg>
<div class="t" style="left:231.90px;top:792.73px;color:#000">컴팩트<i>(Compact) OS</i> 압축<i>_</i>추가<i>.reg</i></div>
<div class="t fd" style="left:446.00px;top:792.73px;color:#6d6d6d"><i>2021-06-12</i> 오후 <i>6:26</i></div>
<svg style="left:218.30px;top:801.32px" width="9.8" height="11.4" viewBox="0 0 19 22"><path d="M2.600 .8h10.400l5 4.800V21.200H2.600z" fill="#fff" stroke="#a8a8a8" stroke-width="1.300"/><path d="M13 .8v4.800h5" fill="#f4f4f4" stroke="#a8a8a8" stroke-width="1"/><path d="M0 9.600h8l2-2.400 3.600 1.600 1 3.600-2.200 2 .2 4.600H0z" fill="#0f86d0"/><path d="M8.400 9.400l2-2 2.600 1.200.8 2.800-2 1.800-1.600-2z" fill="#2aa4e6"/><path d="M8.600 10.400l1.800 1.800M11.800 13.200l1.400 1.600" stroke="#e8f6fe" stroke-width="1.300"/></svg>
<div class="t" style="left:231.90px;top:807.42px;color:#000">탐색기 다시 시작<i>_</i>삭제<i>.reg</i></div>
<div class="t fd" style="left:446.00px;top:807.42px;color:#6d6d6d"><i>2021-06-19</i> 오후 <i>10:34</i></div>
<svg style="left:218.30px;top:816.01px" width="9.8" height="11.4" viewBox="0 0 19 22"><path d="M2.600 .8h10.400l5 4.800V21.200H2.600z" fill="#fff" stroke="#a8a8a8" stroke-width="1.300"/><path d="M13 .8v4.800h5" fill="#f4f4f4" stroke="#a8a8a8" stroke-width="1"/><path d="M0 9.600h8l2-2.400 3.600 1.600 1 3.600-2.200 2 .2 4.600H0z" fill="#0f86d0"/><path d="M8.400 9.400l2-2 2.600 1.200.8 2.800-2 1.800-1.600-2z" fill="#2aa4e6"/><path d="M8.600 10.400l1.800 1.800M11.800 13.200l1.400 1.600" stroke="#e8f6fe" stroke-width="1.300"/></svg>
<div class="t" style="left:231.90px;top:822.11px;color:#000">탐색기 다시 시작<i>_</i>추가<i>.reg</i></div>
<div class="t fd" style="left:446.00px;top:822.11px;color:#6d6d6d"><i>2021-06-19</i> 오후 <i>10:36</i></div>
<svg style="left:218.30px;top:830.70px" width="9.8" height="11.4" viewBox="0 0 19 22"><path d="M2.600 .8h10.400l5 4.800V21.200H2.600z" fill="#fff" stroke="#a8a8a8" stroke-width="1.300"/><path d="M13 .8v4.800h5" fill="#f4f4f4" stroke="#a8a8a8" stroke-width="1"/><path d="M0 9.600h8l2-2.400 3.600 1.600 1 3.600-2.200 2 .2 4.600H0z" fill="#0f86d0"/><path d="M8.400 9.400l2-2 2.600 1.200.8 2.800-2 1.800-1.600-2z" fill="#2aa4e6"/><path d="M8.600 10.400l1.800 1.800M11.800 13.200l1.400 1.600" stroke="#e8f6fe" stroke-width="1.300"/></svg>
<div class="t" style="left:231.90px;top:836.80px;color:#000">파일 <i>Hash</i> 보기<i>_</i>삭제<i>.reg</i></div>
<div class="t fd" style="left:446.00px;top:836.80px;color:#6d6d6d"><i>2021-06-19</i> 오후 <i>9:59</i></div>
<svg style="left:218.30px;top:845.39px" width="9.8" height="11.4" viewBox="0 0 19 22"><path d="M2.600 .8h10.400l5 4.800V21.200H2.600z" fill="#fff" stroke="#a8a8a8" stroke-width="1.300"/><path d="M13 .8v4.800h5" fill="#f4f4f4" stroke="#a8a8a8" stroke-width="1"/><path d="M0 9.600h8l2-2.400 3.600 1.600 1 3.600-2.200 2 .2 4.600H0z" fill="#0f86d0"/><path d="M8.400 9.400l2-2 2.600 1.200.8 2.800-2 1.800-1.600-2z" fill="#2aa4e6"/><path d="M8.600 10.400l1.800 1.800M11.800 13.200l1.400 1.600" stroke="#e8f6fe" stroke-width="1.300"/></svg>
<div class="t" style="left:231.90px;top:851.49px;color:#000">파일 <i>Hash</i> 보기<i>_</i>추가<i>.reg</i></div>
<div class="t fd" style="left:446.00px;top:851.49px;color:#6d6d6d"><i>2021-06-19</i> 오후 <i>9:58</i></div>
<svg style="left:218.30px;top:860.08px" width="9.8" height="11.4" viewBox="0 0 19 22"><path d="M2.600 .8h10.400l5 4.800V21.200H2.600z" fill="#fff" stroke="#a8a8a8" stroke-width="1.300"/><path d="M13 .8v4.800h5" fill="#f4f4f4" stroke="#a8a8a8" stroke-width="1"/><path d="M0 9.600h8l2-2.400 3.600 1.600 1 3.600-2.200 2 .2 4.600H0z" fill="#0f86d0"/><path d="M8.400 9.400l2-2 2.600 1.200.8 2.800-2 1.800-1.600-2z" fill="#2aa4e6"/><path d="M8.600 10.400l1.800 1.800M11.800 13.200l1.400 1.600" stroke="#e8f6fe" stroke-width="1.300"/></svg>
<div class="t" style="left:231.90px;top:866.18px;color:#000">폴더로 이동<i>_</i>삭제<i>.reg</i></div>
<div class="t fd" style="left:446.00px;top:866.18px;color:#6d6d6d"><i>2021-06-19</i> 오후 <i>10:02</i></div>
<svg style="left:218.30px;top:874.77px" width="9.8" height="11.4" viewBox="0 0 19 22"><path d="M2.600 .8h10.400l5 4.800V21.200H2.600z" fill="#fff" stroke="#a8a8a8" stroke-width="1.300"/><path d="M13 .8v4.800h5" fill="#f4f4f4" stroke="#a8a8a8" stroke-width="1"/><path d="M0 9.600h8l2-2.400 3.600 1.600 1 3.600-2.200 2 .2 4.600H0z" fill="#0f86d0"/><path d="M8.400 9.400l2-2 2.600 1.200.8 2.800-2 1.800-1.600-2z" fill="#2aa4e6"/><path d="M8.600 10.400l1.800 1.800M11.800 13.200l1.400 1.600" stroke="#e8f6fe" stroke-width="1.300"/></svg>
<div class="t" style="left:231.90px;top:880.87px;color:#000">폴더로 이동<i>_</i>추가<i>.reg</i></div>
<div class="t fd" style="left:446.00px;top:880.87px;color:#6d6d6d"><i>2021-06-19</i> 오후 <i>10:01</i></div>
<svg style="left:218.30px;top:889.46px" width="9.8" height="11.4" viewBox="0 0 19 22"><path d="M2.600 .8h10.400l5 4.800V21.200H2.600z" fill="#fff" stroke="#a8a8a8" stroke-width="1.300"/><path d="M13 .8v4.800h5" fill="#f4f4f4" stroke="#a8a8a8" stroke-width="1"/><path d="M0 9.600h8l2-2.400 3.600 1.600 1 3.600-2.200 2 .2 4.600H0z" fill="#0f86d0"/><path d="M8.400 9.400l2-2 2.600 1.200.8 2.800-2 1.800-1.600-2z" fill="#2aa4e6"/><path d="M8.600 10.400l1.800 1.800M11.800 13.200l1.400 1.600" stroke="#e8f6fe" stroke-width="1.300"/></svg>
<div class="t" style="left:231.90px;top:895.56px;color:#000">폴더에 복사<i>_</i>삭제<i>.reg</i></div>
<div class="t fd" style="left:446.00px;top:895.56px;color:#6d6d6d"><i>2021-06-19</i> 오후 <i>9:50</i></div>
<svg style="left:218.30px;top:904.15px" width="9.8" height="11.4" viewBox="0 0 19 22"><path d="M2.600 .8h10.400l5 4.800V21.200H2.600z" fill="#fff" stroke="#a8a8a8" stroke-width="1.300"/><path d="M13 .8v4.800h5" fill="#f4f4f4" stroke="#a8a8a8" stroke-width="1"/><path d="M0 9.600h8l2-2.400 3.600 1.600 1 3.600-2.200 2 .2 4.600H0z" fill="#0f86d0"/><path d="M8.400 9.400l2-2 2.600 1.200.8 2.800-2 1.800-1.600-2z" fill="#2aa4e6"/><path d="M8.600 10.400l1.800 1.800M11.800 13.200l1.400 1.600" stroke="#e8f6fe" stroke-width="1.300"/></svg>
<div class="t" style="left:231.90px;top:910.25px;color:#000">폴더에 복사<i>_</i>추가<i>.reg</i></div>
<div class="t fd" style="left:446.00px;top:910.25px;color:#6d6d6d"><i>2021-06-19</i> 오후 <i>9:49</i></div>
<div class="a" style="left:205.40px;top:934.60px;width:338.60px;height:11.40px;background:#f0f0f0"></div>
<div class="a" style="left:217.30px;top:935.60px;width:219.70px;height:9.40px;background:#cdcdcd"></div>
<svg style="left:208.60px;top:937.40px" width="3.40" height="5.20" viewBox="0 0 3.400 5.200"><path d="M3 .4L.6 2.600 3 4.800" fill="none" stroke="#404040" stroke-width="1.400"/></svg>
<svg style="left:536.60px;top:937.40px" width="3.40" height="5.20" viewBox="0 0 3.400 5.200"><path d="M.4.4l2.400 2.200L.4 4.800" fill="none" stroke="#404040" stroke-width="1.400"/></svg>
<div class="t" style="left:103.20px;top:954.20px;color:#444;"><i>56</i>개 항목</div>
<div class="a" style="left:145.60px;top:948.00px;width:0.80px;height:12.00px;background:#f1f1f1"></div>
<div class="t" style="left:153.40px;top:954.20px;color:#444;"><i>1</i>개 항목 선택함 <i>632</i>바이트</div>
<div class="a" style="left:259.00px;top:948.00px;width:0.80px;height:12.00px;background:#f1f1f1"></div>
<div class="a" style="left:510.60px;top:946.00px;width:14.80px;height:15.40px;background:#cce8ff;border:1px solid #4aa3e6"></div>
<svg style="left:513.60px;top:949.60px" width="9.00" height="8.40" viewBox="0 0 9 8.400"><path d="M0 .8h2.400M0 3h2.400M0 5.200h2.400M0 7.400h2.400M3.400 .8H9M3.400 3H9M3.400 5.200H9M3.400 7.400H9" stroke="#5a6a7a" stroke-width="1"/></svg>
<svg style="left:528.60px;top:949.40px" width="9.60" height="8.60" viewBox="0 0 9.600 8.600"><rect x=".5" y=".5" width="8.600" height="7.600" fill="#eef3f8" stroke="#5a6a7a" stroke-width=".9"/><rect x="2" y="2.200" width="5.600" height="3" fill="#4a90c8"/></svg>
<div class="a" style="left:560.60px;top:4.60px;width:1119.40px;height:494.80px;background:#fff;box-shadow:0 0 3px rgba(0,0,0,.12)"></div>
<div class="a" style="left:560.60px;top:4.60px;width:1119.40px;height:21.20px;background:#6b6b6b"></div>
<svg style="left:566.60px;top:9.70px" width="10.40" height="10.19" viewBox="0 0 22 21.600"><path d="M3 0h6.500l2 1.600H19a3 3 0 0 1 3 3V10H0V3a3 3 0 0 1 3-3z" fill="#5f5fea"/><rect x=".7" y="4.300" width="20.600" height="16.600" rx="3" fill="#9f9ffc" stroke="#6e6ef2" stroke-width="1.400"/><rect x="3" y="6" width="16" height="1.200" rx=".6" fill="#b8b8fe" opacity=".8"/></svg>
<div class="a" style="left:582.60px;top:10.60px;width:0.80px;height:9.00px;background:#8d8d8d"></div>
<svg style="left:590.60px;top:10.00px" width="9.00" height="11.00" viewBox="0 0 9 11"><path d="M.4.4h6l2.200 2.200v8H.4z" fill="#fff" stroke="#c8c8c8" stroke-width=".6"/><path d="M2 6l1.800 2L7 3.600" fill="none" stroke="#e8501c" stroke-width="1.300"/></svg>
<svg style="left:606.00px;top:10.00px" width="9.40" height="10.80" viewBox="0 0 9.400 10.800"><path d="M0 0h7.400v6.400h2v4.400H0z" fill="#fde48a"/><path d="M7.400 6.400h2v4.400h-2z" fill="#f2c94c"/></svg>
<div class="a" style="left:620.80px;top:14.20px;width:5.00px;height:0.90px;background:#1a1a1a"></div>
<svg style="left:620.80px;top:15.80px" width="5.00" height="2.60" viewBox="0 0 5 2.600"><path d="M0 0h5L2.500 2.600z" fill="#1a1a1a"/></svg>
<div class="a" style="left:631.80px;top:10.60px;width:0.80px;height:9.00px;background:#8d8d8d"></div>
<div class="a" style="left:704.00px;top:6.80px;width:57.00px;height:19.20px;background:#efef83"></div>
<div class="tc" style="left:732.40px;top:16.00px;color:#4a4a4a;">관리</div>
<div class="t" style="left:769.90px;top:15.00px;font-size:8.3px;word-spacing:0;letter-spacing:-0.290px;transform:translateY(-50%) scaleY(1.1);color:#9b9b9b">MPB WALLS</div>
<div class="a" style="left:1596.40px;top:15.00px;width:7.40px;height:0.90px;background:#9a9a9a"></div>
<div class="a" style="left:1627.80px;top:11.40px;width:7.20px;height:7.20px;border:1px solid #9a9a9a"></div>
<svg style="left:1659.80px;top:11.20px" width="7.60" height="7.60" viewBox="0 0 10 10"><path d="M.6.6l8.800 8.800M9.400.6L.6 9.400" stroke="#9a9a9a" stroke-width="1.200"/></svg>
<div class="a" style="left:561.60px;top:25.80px;width:1117.40px;height:17.00px;background:#fff"></div>
<div class="a" style="left:561.60px;top:42.80px;width:1117.40px;height:0.80px;background:#dadbdc"></div>
<div class="a" style="left:560.60px;top:25.80px;width:39.40px;height:16.10px;background:#0563b4"></div>
<div class="tc" style="left:580.40px;top:34.20px;color:#fff;">파일</div>
<div class="tc" style="left:613.90px;top:34.20px;color:#444;">홈</div>
<div class="tc" style="left:646.80px;top:34.20px;color:#444;">공유</div>
<div class="tc" style="left:683.90px;top:34.20px;color:#444;">보기</div>
<div class="tc" style="left:732.10px;top:34.20px;color:#444;">사진 도구</div>
<div class="a" style="left:704.00px;top:26.00px;width:0.80px;height:13.00px;background:linear-gradient(#e2e2e2,#fff)"></div>
<div class="a" style="left:760.40px;top:26.00px;width:0.80px;height:13.00px;background:linear-gradient(#e2e2e2,#fff)"></div>
<svg style="left:1653.50px;top:32.60px" width="6.20" height="4.20" viewBox="0 0 10 6.600"><path d="M.8.8L5 5.400 9.200.8" fill="none" stroke="#9a9a9a" stroke-width="1.5"/></svg>
<div class="a" style="left:1666.20px;top:28.80px;width:11.20px;height:11.20px;border-radius:50%;background:#0b5cad;border:.6px solid #084a8c"></div><div class="tc" style="left:1671.80px;top:34.60px;color:#fff;font-weight:bold;font-size:9.5px"><i>?</i></div>
<svg style="left:569.80px;top:54.00px" width="8.40" height="7.20" viewBox="0 0 14 12"><path d="M6 1L1 6l5 5M1 6h12.400" fill="none" stroke="#5a5a5a" stroke-width="2"/></svg><svg style="left:590.30px;top:54.00px" width="8.40" height="7.20" viewBox="0 0 14 12"><path d="M8 1l5 5-5 5M13 6H.6" fill="none" stroke="#cdcdcd" stroke-width="1.900"/></svg><svg style="left:609.10px;top:56.00px" width="4.40" height="2.60" viewBox="0 0 8 5"><path d="M.6.6L4 4 7.400.6" fill="none" stroke="#7a7a7a" stroke-width="1.300"/></svg><svg style="left:622.00px;top:53.20px" width="7.60" height="8.80" viewBox="0 0 12 14"><path d="M1 6l5-5 5 5M6 1v12.600" fill="none" stroke="#505050" stroke-width="2"/></svg>
<div class="a" style="left:635.20px;top:47.00px;width:886.40px;height:20.60px;border:1px solid #d9d9d9;background:#fff"></div>
<div class="a" style="left:1500.20px;top:47.00px;width:0.90px;height:20.60px;background:#d9d9d9"></div>
<svg style="left:637.30px;top:52.01px" width="11.00" height="10.78" viewBox="0 0 22 21.600"><path d="M3 0h6.500l2 1.600H19a3 3 0 0 1 3 3V10H0V3a3 3 0 0 1 3-3z" fill="#5f5fea"/><rect x=".7" y="4.300" width="20.600" height="16.600" rx="3" fill="#9f9ffc" stroke="#6e6ef2" stroke-width="1.400"/><rect x="3" y="6" width="16" height="1.200" rx=".6" fill="#b8b8fe" opacity=".8"/></svg>
<svg style="left:653.40px;top:55.40px" width="3.00" height="5.00" viewBox="0 0 3 5"><path d="M.5.5l2 2-2 2" fill="none" stroke="#666" stroke-width=".9"/></svg>
<div class="t" style="left:662.70px;top:57.60px;font-size:8.3px;word-spacing:0;letter-spacing:-0.449px;transform:translateY(-50%) scaleY(1.1);color:#222">LoVE</div>
<svg style="left:687.60px;top:55.40px" width="3.00" height="5.00" viewBox="0 0 3 5"><path d="M.5.5l2 2-2 2" fill="none" stroke="#666" stroke-width=".9"/></svg>
<div class="t" style="left:697.60px;top:57.60px;color:#222;">사진</div>
<svg style="left:720.40px;top:55.40px" width="3.00" height="5.00" viewBox="0 0 3 5"><path d="M.5.5l2 2-2 2" fill="none" stroke="#666" stroke-width=".9"/></svg>
<div class="t" style="left:730.10px;top:57.60px;font-size:8.3px;word-spacing:0;letter-spacing:-0.290px;transform:translateY(-50%) scaleY(1.1);color:#222">MPB WALLS</div>
<svg style="left:1486.90px;top:56.20px" width="6.20" height="4.20" viewBox="0 0 10 6.600"><path d="M.8.8L5 5.400 9.200.8" fill="none" stroke="#444" stroke-width="2.0"/></svg>
<svg style="left:1506.30px;top:53.00px" width="9.00" height="9.60" viewBox="0 0 9 9.600"><path d="M7.300 3.500A3.300 3.300 0 1 1 4.200 2.100" fill="none" stroke="#6a6a6a" stroke-width="1.150"/><path d="M3.300.5l3.100.2-.7 2.900z" fill="#6a6a6a"/></svg>
<div class="a" style="left:1530.20px;top:47.00px;width:141.00px;height:20.60px;border:1px solid #d9d9d9;background:#fff"></div>
<svg style="left:1656.60px;top:53.40px" width="8.40" height="8.80" viewBox="0 0 12 12"><circle cx="7.600" cy="4.400" r="3.100" fill="none" stroke="#5a5a5a" stroke-width="1.500"/><path d="M5.300 6.800L.9 11.200" stroke="#5a5a5a" stroke-width="1.800"/></svg>
<div class="a" style="left:561.40px;top:84.00px;width:108.40px;height:16.80px;background:#d9d9d9"></div>
<svg style="left:577.40px;top:87.10px" width="10.8" height="10.4" viewBox="0 0 22 21"><rect x=".9" y=".9" width="20.2" height="19.2" rx="4" fill="#f4f4f4" stroke="#8a8a8a" stroke-width="1.6"/><rect x="5.2" y="5.4" width="11.6" height="7.4" rx="1" fill="none" stroke="#6f6f6f" stroke-width="1.4"/><path d="M8 15.8h6M11 12.8v3" stroke="#6f6f6f" stroke-width="1.4"/></svg>
<div class="t" style="left:592.80px;top:92.50px;color:#111">내 <i>PC</i></div>
<div class="a" style="left:671.20px;top:73.00px;width:0.80px;height:410.00px;background:#f2f2f2"></div>
<div class="a" style="left:1522.00px;top:354.00px;width:72.60px;height:91.00px;background:#d9d9d9"></div>
<div class="a" style="left:1598.00px;top:354.00px;width:73.40px;height:91.00px;background:#cce8ff;border:1px solid #99d1ff"></div>
<svg class="th" style="left:686.30px;top:103.80px" width="63" height="39" viewBox="0 0 63 39"><rect x="0" y="0" width="63" height="39" fill="#21b1a5"/><polygon points="18,39 41,22 52,39" fill="#f2cf1f"/><polygon points="28,39 48,26 60,39" fill="#9ad8ee"/><polygon points="38,39 48,26 50,39" fill="#7cc4e4"/><polygon points="0,39 0,36 11,30 26,39" fill="#a9cd3b"/><polygon points="20,39 33,35 46,39" fill="#c8246c"/><polygon points="50,39 56,32 63,38 63,39" fill="#4a6ee0"/></svg>
<div class="lbl" style="left:718.40px;top:146.10px"><span>LOOKOUT_WALL</span><br>S_MPB (1).jpg</div>
<svg class="th" style="left:762.60px;top:103.80px" width="63" height="39" viewBox="0 0 63 39"><defs><linearGradient id="w1" gradientUnits="userSpaceOnUse" x1="0" y1="0" x2="0" y2="39"><stop offset="0" stop-color="#c9b4e6"/><stop offset="0.35" stop-color="#e6bedc"/><stop offset="0.55" stop-color="#c8b4e0"/><stop offset="1" stop-color="#8c9cd4"/></linearGradient></defs><rect x="0" y="0" width="63" height="39" fill="url(#w1)"/><ellipse cx="14" cy="13" rx="17" ry="3.2" fill="#f2b2d0" opacity=".75"/><polygon points="0,24 10,20 22,23 34,19 44,24 48,14 56,11 63,13 63,39 0,39" fill="#6f88c8"/><polygon points="3,25 14,21 26,24 32,28 12,31" fill="#a9b8e2"/><polygon points="48,14 52,12.5 53.500,30 46,34" fill="#cfa2c6"/><polygon points="0,33 12,30 24,35 36,31 46,35 63,30 63,39 0,39" fill="#303c7c"/></svg>
<div class="lbl" style="left:794.70px;top:146.10px"><span>LOOKOUT_WALL</span><br>S_MPB (1).png</div>
<svg class="th" style="left:838.90px;top:103.80px" width="63" height="39" viewBox="0 0 63 39"><rect x="0" y="0" width="63" height="39" fill="#b5afdb"/><ellipse cx="51.500" cy="30.600" rx="4.600" ry="2.100" fill="#f2f0ee"/><circle cx="50.600" cy="29" r="2.300" fill="#f2f0ee"/><circle cx="56" cy="31.200" r="1.500" fill="#f4d870"/></svg>
<div class="lbl" style="left:871.00px;top:146.10px"><span>LOOKOUT_WALL</span><br>S_MPB (2).jpg</div>
<svg class="th" style="left:915.20px;top:103.80px" width="63" height="39" viewBox="0 0 63 39"><rect x="0" y="0" width="63" height="39" fill="#c4a4f0"/><path d="M0 8C10 5 20 11 32 8S52 5 63 7V39H0z" fill="#a0e8d0"/><path d="M0 15C12 10 22 16 34 12S54 11 63 13V39H0z" fill="#f8d440"/><path d="M0 20C10 16 24 22 36 19S54 15 63 18V39H0z" fill="#f6a030"/><path d="M0 25h6v-2h3v2h4v-3h3v3h5v-4h3v2h3v-3h4v4h4v-3h3v3h5v-2h4v2h9V30H0z" fill="#fdf8f0"/><rect x="0" y="28.5" width="63" height="10.5" fill="#3f8fe2"/></svg>
<div class="lbl" style="left:947.30px;top:146.10px"><span>LOOKOUT_WALL</span><br>S_MPB (2).png</div>
<svg class="th" style="left:991.50px;top:107.80px" width="63" height="35" viewBox="0 0 63 35"><defs><linearGradient id="w2" gradientUnits="userSpaceOnUse" x1="0" y1="21" x2="0" y2="35"><stop offset="0" stop-color="#7fb0e0"/><stop offset="1" stop-color="#a8ccf0"/></linearGradient></defs><rect x="0" y="0" width="63" height="35" fill="#dde8f4"/><rect x="0" y="21.5" width="63" height="13.5" fill="url(#w2)"/><polygon points="0,22 0,19 6,17.5 12,19.5 18,18 26,21.5 30,22" fill="#1e3c5a"/><polygon points="34,22 40,20.5 48,18 54,19.5 63,17.5 63,22" fill="#1e3c5a"/><polygon points="0,22 0,25 6,26.5 12,24.5 18,26 26,22.5 30,22" fill="#2a4c70" opacity=".5"/><polygon points="34,22 40,23.5 48,26 54,24.5 63,26.5 63,22" fill="#2a4c70" opacity=".5"/></svg>
<div class="lbl" style="left:1023.60px;top:146.10px"><span>LOOKOUT_WALL</span><br>S_MPB (3).jpg</div>
<svg class="th" style="left:1067.80px;top:103.80px" width="63" height="39" viewBox="0 0 63 39"><rect x="0" y="0" width="63" height="39" fill="#662d91"/><circle cx="31.500" cy="16" r="1" fill="none" stroke="#e8d8f4" stroke-width=".5"/><path d="M30.700 19.500h1.600l-.8 2z" fill="#e8d8f4"/></svg>
<div class="lbl" style="left:1099.90px;top:146.10px"><span>LOOKOUT_WALL</span><br>S_MPB (3).png</div>
<svg class="th" style="left:1144.10px;top:107.80px" width="63" height="35" viewBox="0 0 63 35"><defs><linearGradient id="w3" gradientUnits="userSpaceOnUse" x1="0" y1="0" x2="63" y2="12"><stop offset="0" stop-color="#c81048"/><stop offset="0.3" stop-color="#e42a74"/><stop offset="0.55" stop-color="#f0566c"/><stop offset="0.78" stop-color="#f89a34"/><stop offset="1" stop-color="#fab01c"/></linearGradient></defs><rect x="0" y="0" width="63" height="35" fill="url(#w3)"/><path d="M20 0C30 10 40 22 54 35" fill="none" stroke="#fbd0c8" stroke-width="1.200" opacity=".55"/><path d="M26 0C36 10 48 20 63 28" fill="none" stroke="#fde0b0" stroke-width=".8" opacity=".5"/><polygon points="46,0 63,0 63,20" fill="#fcc040" opacity=".45"/></svg>
<div class="lbl" style="left:1176.20px;top:146.10px"><span>LOOKOUT_WALL</span><br>S_MPB (4).jpg</div>
<svg class="th" style="left:1220.40px;top:107.80px" width="63" height="35" viewBox="0 0 63 35"><rect x="0" y="0" width="63" height="35" fill="#4b0a8c"/><path d="M50 1l7 0-1 6-3 5-1 7-4 6-6 4-5 3-5 2.500 1.500-3.500 5-3 5-4 3-6 2-8z" fill="#5c18a8"/></svg>
<div class="lbl" style="left:1252.50px;top:146.10px"><span>LOOKOUT_WALL</span><br>S_MPB (4).png</div>
<svg class="th" style="left:1296.70px;top:107.80px" width="63" height="35" viewBox="0 0 63 35"><defs><linearGradient id="w4" gradientUnits="userSpaceOnUse" x1="0" y1="0" x2="0" y2="35"><stop offset="0" stop-color="#6428b0"/><stop offset="0.4" stop-color="#8a3cc4"/><stop offset="0.55" stop-color="#3a2a80"/><stop offset="0.72" stop-color="#2a78cc"/><stop offset="1" stop-color="#1fc0a4"/></linearGradient></defs><rect x="0" y="0" width="63" height="35" fill="url(#w4)"/><circle cx="52" cy="9" r="5.200" fill="#f8a030"/><circle cx="52.500" cy="8" r="3.200" fill="#fcd040"/><polygon points="0,10 6,5 11,9 16,4 22,9 28,5 34,10 40,6 46,11 52,8 58,12 63,9 63,20 0,20" fill="#6a34b8"/><polygon points="0,17 3,13 5,16 8,12 11,17 14,13 17,18 20,14 23,18 27,13 30,18 34,14 37,18 41,13 44,17 48,12 51,16 55,11 58,15 61,11 63,14 63,22 0,22" fill="#1c1a44"/><polygon points="0,22 3,27 5,24 8,29 11,23 14,27 17,23 20,28 23,24 27,30 30,24 34,28 37,23 41,29 44,24 48,30 51,25 55,30 58,25 61,29 63,26 63,22" fill="#1c2a5c" opacity=".8"/></svg>
<div class="lbl" style="left:1328.80px;top:146.10px"><span>LOOKOUT_WALL</span><br>S_MPB (5).jpg</div>
<svg class="th" style="left:1373.00px;top:103.80px" width="63" height="39" viewBox="0 0 63 39"><rect x="0" y="0" width="63" height="39" fill="#9b1a5e"/><path d="M30.500 17l1 3.500M32.600 16.500v4M31.600 22.500v1" stroke="#f0d0e0" stroke-width=".5"/></svg>
<div class="lbl" style="left:1405.10px;top:146.10px"><span>LOOKOUT_WALL</span><br>S_MPB (5).png</div>
<svg class="th" style="left:1449.30px;top:107.80px" width="63" height="35" viewBox="0 0 63 35"><defs><radialGradient id="w5" gradientUnits="userSpaceOnUse" cx="52" cy="24" r="15"><stop offset="0" stop-color="#f8688c"/><stop offset="1" stop-color="#f83a66"/></radialGradient></defs><rect x="0" y="0" width="63" height="35" fill="#403b69"/><circle cx="3" cy="25" r="7" fill="#2e2a58" stroke="#20c8c0" stroke-width="1.300"/><path d="M0 0L18 8" stroke="#2ee8d4" stroke-width="3.200" stroke-linecap="round"/><circle cx="22" cy="9.500" r="2" fill="#f04a80"/><path d="M41 4l10 5" stroke="#2ee8d4" stroke-width="2" stroke-linecap="round"/><circle cx="16.500" cy="21" r="2.600" fill="#30dcc8"/><circle cx="33.500" cy="17.500" r="4.200" fill="#f8c25a"/><circle cx="22.500" cy="29.500" r="1.600" fill="#f83a7a"/><circle cx="56" cy="28" r="14.500" fill="url(#w5)"/></svg>
<div class="lbl" style="left:1481.40px;top:146.10px"><span>LOOKOUT_WALL</span><br>S_MPB (6).jpg</div>
<svg class="th" style="left:1525.60px;top:112.80px" width="63" height="30" viewBox="0 0 63 30"><defs><linearGradient id="w6" gradientUnits="userSpaceOnUse" x1="0" y1="0" x2="63" y2="30"><stop offset="0" stop-color="#f41c24"/><stop offset="0.45" stop-color="#e82030"/><stop offset="1" stop-color="#e8444a"/></linearGradient><radialGradient id="w7" gradientUnits="userSpaceOnUse" cx="52" cy="7" r="26"><stop offset="0" stop-color="#1a8c9c" stop-opacity="1"/><stop offset="0.55" stop-color="#2a8a98" stop-opacity="0.75"/><stop offset="1" stop-color="#2a8a98" stop-opacity="0"/></radialGradient><radialGradient id="w8" gradientUnits="userSpaceOnUse" cx="2" cy="30" r="26"><stop offset="0" stop-color="#3a0614" stop-opacity="1"/><stop offset="1" stop-color="#3a0614" stop-opacity="0"/></radialGradient></defs><rect x="0" y="0" width="63" height="30" fill="url(#w6)"/><rect x="0" y="0" width="63" height="30" fill="url(#w7)"/><rect x="0" y="0" width="63" height="30" fill="url(#w8)"/></svg>
<div class="lbl" style="left:1557.70px;top:146.10px"><span>LOOKOUT_WALL</span><br>S_MPB (7).jpg</div>
<svg class="th" style="left:1601.90px;top:107.80px" width="63" height="35" viewBox="0 0 63 35"><defs><linearGradient id="w9" gradientUnits="userSpaceOnUse" x1="0" y1="0" x2="63" y2="20"><stop offset="0" stop-color="#3430c0"/><stop offset="0.4" stop-color="#7a4cd0"/><stop offset="0.75" stop-color="#c03cb8"/><stop offset="1" stop-color="#dc3ca4"/></linearGradient></defs><rect x="0" y="0" width="63" height="35" fill="url(#w9)"/><polygon points="8,35 22,12 34,35" fill="#ffffff" opacity=".08"/><polygon points="26,0 44,22 58,4" fill="#ffffff" opacity=".08"/><polygon points="36,35 50,16 63,35" fill="#ffffff" opacity=".07"/><polygon points="0,0 12,14 0,26" fill="#000040" opacity=".12"/></svg>
<div class="lbl" style="left:1634.00px;top:146.10px"><span>LOOKOUT_WALL</span><br>S_MPB (8).jpg</div>
<svg class="th" style="left:686.30px;top:199.80px" width="63" height="35" viewBox="0 0 63 35"><defs><linearGradient id="w10" gradientUnits="userSpaceOnUse" x1="0" y1="0" x2="30" y2="35"><stop offset="0" stop-color="#fac4cc"/><stop offset="0.4" stop-color="#f67ea0"/><stop offset="0.8" stop-color="#f04482"/><stop offset="1" stop-color="#e0408c"/></linearGradient></defs><rect x="0" y="0" width="63" height="35" fill="url(#w10)"/><polygon points="0,31 8,29.5 16,31 26,28.5 36,30.5 46,29 56,30.5 63,28.5 63,35 0,35" fill="#2a1a58"/></svg>
<div class="lbl" style="left:718.40px;top:238.50px"><span>LOOKOUT_WALL</span><br>S_MPB (9).jpg</div>
<svg class="th" style="left:762.60px;top:199.80px" width="63" height="35" viewBox="0 0 63 35"><defs><linearGradient id="w11" gradientUnits="userSpaceOnUse" x1="0" y1="0" x2="0" y2="35"><stop offset="0" stop-color="#4c4888"/><stop offset="0.45" stop-color="#7a6098"/><stop offset="0.7" stop-color="#b0709a"/><stop offset="1" stop-color="#c87888"/></linearGradient></defs><rect x="0" y="0" width="63" height="35" fill="url(#w11)"/><circle cx="45" cy="13" r="1.100" fill="#e8e0f0"/><path d="M0 31C5 27 9 27 14 30S22 26 27 29 36 27 41 30 50 26 55 29 60 27 63 28V35H0z" fill="#e08c78"/><path d="M0 35C4 31 8 31 13 33S22 30 27 33 36 31 41 33 50 30 55 33 60 31 63 32V35z" fill="#a05c80"/></svg>
<div class="lbl" style="left:794.70px;top:238.50px"><span>LOOKOUT_WALL</span><br>S_MPB (10).jpg</div>
<svg class="th" style="left:838.90px;top:199.80px" width="63" height="35" viewBox="0 0 63 35"><rect x="0" y="0" width="63" height="35" fill="#3b0b6b"/><rect x="0" y="0" width="63" height="2.5" fill="#4a2080" opacity=".5"/><rect x="0" y="32" width="63" height="3" fill="#4a2080" opacity=".5"/></svg>
<div class="lbl" style="left:871.00px;top:238.50px"><span>LOOKOUT_WALL</span><br>S_MPB (11).jpg</div>
<svg class="th" style="left:915.20px;top:199.80px" width="63" height="35" viewBox="0 0 63 35"><defs><linearGradient id="w12" gradientUnits="userSpaceOnUse" x1="0" y1="0" x2="63" y2="0"><stop offset="0" stop-color="#5a4878"/><stop offset="1" stop-color="#3c5e7c"/></linearGradient><radialGradient id="w13" gradientUnits="userSpaceOnUse" cx="26" cy="19" r="24"><stop offset="0" stop-color="#865068" stop-opacity="1"/><stop offset="1" stop-color="#865068" stop-opacity="0"/></radialGradient></defs><rect x="0" y="0" width="63" height="35" fill="url(#w12)"/><rect x="0" y="0" width="63" height="35" fill="url(#w13)"/></svg>
<div class="lbl" style="left:947.30px;top:238.50px"><span>LOOKOUT_WALL</span><br>S_MPB (12).jpg</div>
<svg class="th" style="left:991.50px;top:207.80px" width="63" height="27" viewBox="0 0 63 27"><rect x="0" y="0" width="63" height="27" fill="#d2b0ea"/><polygon points="0,8 6,3 10,7 16,1 22,8 28,4 34,9 40,3 46,8 52,2 58,7 63,4 63,27 0,27" fill="#b48cd4"/><polygon points="0,13 6,9 12,13 18,8 24,14 30,15 36,14 42,9 48,13 54,8 60,12 63,10 63,27 0,27" fill="#8a5cae"/><polygon points="0,18 10,14 20,17 29,20 29,27 0,27" fill="#6c4490"/><polygon points="36,20 44,16 54,14 63,17 63,27 36,27" fill="#6c4490"/><polygon points="30,16 34,16 37,27 26,27" fill="#c8a8e0"/></svg>
<div class="lbl" style="left:1023.60px;top:238.50px"><span>LOOKOUT_WALL</span><br>S_MPB (13).jpg</div>
<svg class="th" style="left:1067.80px;top:199.80px" width="63" height="35" viewBox="0 0 63 35"><rect x="0" y="0" width="63" height="35" fill="#c767f8"/><ellipse cx="31.800" cy="17" rx="2.200" ry="1.600" fill="#e0a040"/></svg>
<div class="lbl" style="left:1099.90px;top:238.50px"><span>LOOKOUT_WALL</span><br>S_MPB (14).jpg</div>
<svg class="th" style="left:1144.10px;top:199.80px" width="63" height="35" viewBox="0 0 63 35"><defs><linearGradient id="w14" gradientUnits="userSpaceOnUse" x1="0" y1="0" x2="0" y2="35"><stop offset="0" stop-color="#5a2a64"/><stop offset="1" stop-color="#6c3878"/></linearGradient><radialGradient id="w15" gradientUnits="userSpaceOnUse" cx="32" cy="6" r="20"><stop offset="0" stop-color="#ffffff" stop-opacity="1"/><stop offset="0.45" stop-color="#ffffff" stop-opacity="0.95"/><stop offset="0.8" stop-color="#e0c8ec" stop-opacity="0.45"/><stop offset="1" stop-color="#c0a0d0" stop-opacity="0"/></radialGradient></defs><rect x="0" y="0" width="63" height="35" fill="url(#w14)"/><rect x="0" y="0" width="63" height="35" fill="url(#w15)"/><ellipse cx="9" cy="19" rx="9" ry="5" fill="#5c2c68" opacity=".8"/><ellipse cx="54" cy="15" rx="8" ry="7" fill="#6a3478" opacity=".8"/><polygon points="0,27 20,25 40,26 63,24 63,35 0,35" fill="#1c101e"/><polygon points="20,26 22,16 21,11 24,9 27,11 28,9 30,12 29,17 31,26" fill="#2a1830"/><polygon points="33,26 33.5,22 35,22 35.5,26" fill="#2a1830"/></svg>
<div class="lbl" style="left:1176.20px;top:238.50px"><span>LOOKOUT_WALL</span><br>S_MPB (15).jpg</div>
<svg class="th" style="left:1220.40px;top:199.80px" width="63" height="35" viewBox="0 0 63 35"><defs><linearGradient id="w16" gradientUnits="userSpaceOnUse" x1="0" y1="0" x2="0" y2="35"><stop offset="0" stop-color="#23223e"/><stop offset="0.35" stop-color="#443c64"/><stop offset="0.6" stop-color="#a07a98"/><stop offset="0.75" stop-color="#c8a4b4"/><stop offset="1" stop-color="#6a5c78"/></linearGradient></defs><rect x="0" y="0" width="63" height="35" fill="url(#w16)"/><circle cx="31" cy="6" r=".9" fill="#f0f0f8"/><polygon points="14,22 24,17 30,14 36,17 46,22" fill="#5a4a70"/><polygon points="27,16 30,14 34,17 40,20 30,19" fill="#e8d4e0"/><rect x="0" y="22" width="63" height="5" fill="#cdb0c4" opacity=".75"/><polygon points="0,35 0,25 3,21 5,27 8,22 11,30 16,33 63,35" fill="#2a2440"/><polygon points="63,35 63,23 60,17 58,24 55,19 52,28 46,33 30,35" fill="#2a2440"/></svg>
<div class="lbl" style="left:1252.50px;top:238.50px"><span>LOOKOUT_WALL</span><br>S_MPB (16).jpg</div>
<svg class="th" style="left:1296.70px;top:199.80px" width="63" height="35" viewBox="0 0 63 35"><defs><radialGradient id="w17" gradientUnits="userSpaceOnUse" cx="26" cy="18" r="40"><stop offset="0" stop-color="#9a6ce2"/><stop offset="1" stop-color="#7a48c8"/></radialGradient></defs><rect x="0" y="0" width="63" height="35" fill="url(#w17)"/><rect x="0" y="32.5" width="63" height="2.5" fill="#6a38b8" opacity=".6"/></svg>
<div class="lbl" style="left:1328.80px;top:238.50px"><span>LOOKOUT_WALL</span><br>S_MPB (17).jpg</div>
<svg class="th" style="left:1373.00px;top:199.80px" width="63" height="35" viewBox="0 0 63 35"><rect x="0" y="0" width="63" height="35" fill="#673572"/><circle cx="31.500" cy="11" r="1.300" fill="#4aa0e0"/><rect x="27.500" y="18" width="8" height="1.500" fill="#f0e8f4"/><rect x="26.500" y="20.500" width="10" height="1.500" fill="#f0e8f4"/><rect x="28.500" y="23" width="6" height="1.500" fill="#f0e8f4"/></svg>
<div class="lbl" style="left:1405.10px;top:238.50px"><span>LOOKOUT_WALL</span><br>S_MPB (18).jpg</div>
<svg class="th" style="left:1449.30px;top:199.80px" width="63" height="35" viewBox="0 0 63 35"><defs><linearGradient id="w18" gradientUnits="userSpaceOnUse" x1="0" y1="0" x2="0" y2="35"><stop offset="0" stop-color="#f8c8cc"/><stop offset="0.45" stop-color="#f4c0cc"/><stop offset="1" stop-color="#c0b0d0"/></linearGradient></defs><rect x="0" y="0" width="63" height="35" fill="url(#w18)"/><polygon points="0,19 6,17 12,19 18,15 24,13 28,15 34,14 40,17 46,16 54,18 63,16 63,35 0,35" fill="#7a80b4"/><polygon points="16,17 24,13 28,15 34,14 40,17 30,18" fill="#e8e0f0"/><polygon points="0,35 0,17 2,21 4,18 6,23 9,20 12,25 16,22 20,26 26,24 32,26 38,24 44,26 48,21 50,18 52,23 55,17 57,22 60,16 63,19 63,35" fill="#2e2c4c"/><rect x="0" y="29" width="63" height="6" fill="#2a2440"/></svg>
<div class="lbl" style="left:1481.40px;top:238.50px"><span>LOOKOUT_WALL</span><br>S_MPB (19).jpg</div>
<svg class="th" style="left:1525.60px;top:199.80px" width="63" height="35" viewBox="0 0 63 35"><defs><linearGradient id="w19" gradientUnits="userSpaceOnUse" x1="0" y1="0" x2="63" y2="35"><stop offset="0" stop-color="#c8b4f8"/><stop offset="0.5" stop-color="#a8a0f4"/><stop offset="1" stop-color="#8040d8"/></linearGradient><radialGradient id="w20" gradientUnits="userSpaceOnUse" cx="34" cy="17" r="24"><stop offset="0" stop-color="#7ce4fa" stop-opacity="1"/><stop offset="0.5" stop-color="#88d4f8" stop-opacity="0.8"/><stop offset="1" stop-color="#88d4f8" stop-opacity="0"/></radialGradient><radialGradient id="w21" gradientUnits="userSpaceOnUse" cx="6" cy="22" r="16"><stop offset="0" stop-color="#e8e4fc" stop-opacity="0.9"/><stop offset="1" stop-color="#e8e4fc" stop-opacity="0"/></radialGradient></defs><rect x="0" y="0" width="63" height="35" fill="url(#w19)"/><rect x="0" y="0" width="63" height="35" fill="url(#w20)"/><rect x="0" y="0" width="63" height="35" fill="url(#w21)"/></svg>
<div class="lbl" style="left:1557.70px;top:238.50px"><span>LOOKOUT_WALL</span><br>S_MPB (20).jpg</div>
<svg class="th" style="left:1601.90px;top:199.80px" width="63" height="35" viewBox="0 0 63 35"><defs><linearGradient id="w22" gradientUnits="userSpaceOnUse" x1="0" y1="10" x2="63" y2="30"><stop offset="0" stop-color="#13288c"/><stop offset="0.25" stop-color="#2c3690"/><stop offset="0.45" stop-color="#5c4aa0"/><stop offset="0.62" stop-color="#3a78b8"/><stop offset="0.78" stop-color="#2cc0c0"/><stop offset="1" stop-color="#7adcd0"/></linearGradient></defs><rect x="0" y="0" width="63" height="35" fill="url(#w22)"/></svg>
<div class="lbl" style="left:1634.00px;top:238.50px"><span>LOOKOUT_WALL</span><br>S_MPB (22).jpg</div>
<svg class="th" style="left:686.30px;top:299.40px" width="63" height="28" viewBox="0 0 63 28"><defs><linearGradient id="w23" gradientUnits="userSpaceOnUse" x1="0" y1="10" x2="63" y2="24"><stop offset="0" stop-color="#6a94fa"/><stop offset="0.35" stop-color="#c07cf0"/><stop offset="0.6" stop-color="#f470d0"/><stop offset="0.85" stop-color="#f8a040"/><stop offset="1" stop-color="#f8a828"/></linearGradient><radialGradient id="w25" gradientUnits="userSpaceOnUse" cx="60" cy="0" r="34"><stop offset="0" stop-color="#fde8f0" stop-opacity="0.95"/><stop offset="1" stop-color="#fde8f0" stop-opacity="0"/></radialGradient><radialGradient id="w26" gradientUnits="userSpaceOnUse" cx="0" cy="0" r="22"><stop offset="0" stop-color="#e8f0ff" stop-opacity="0.9"/><stop offset="1" stop-color="#e8f0ff" stop-opacity="0"/></radialGradient></defs><rect x="0" y="0" width="63" height="28" fill="url(#w23)"/><rect x="0" y="0" width="63" height="28" fill="url(#w25)"/><rect x="0" y="0" width="63" height="28" fill="url(#w26)"/></svg>
<div class="lbl" style="left:718.40px;top:331.10px"><span>LOOKOUT_WALL</span><br>S_MPB (23).jpg</div>
<svg class="th" style="left:762.60px;top:303.40px" width="63" height="24" viewBox="0 0 63 24"><defs><linearGradient id="w27" gradientUnits="userSpaceOnUse" x1="0" y1="0" x2="63" y2="10"><stop offset="0" stop-color="#f62a44"/><stop offset="0.28" stop-color="#f8702c"/><stop offset="0.5" stop-color="#f8dc28"/><stop offset="0.72" stop-color="#f490c0"/><stop offset="1" stop-color="#e458e8"/></linearGradient></defs><rect x="0" y="0" width="63" height="24" fill="url(#w27)"/><path d="M0 24C14 22 22 12 36 13S56 10 63 2V9C54 16 46 15 36 17S16 24 6 24z" fill="#8a3ad8" opacity=".75"/><path d="M0 24h30C20 22 10 20 0 14z" fill="#f02890" opacity=".7"/></svg>
<div class="lbl" style="left:794.70px;top:331.10px"><span>LOOKOUT_WALL</span><br>S_MPB (24).jpg</div>
<svg class="th" style="left:838.90px;top:288.40px" width="63" height="39" viewBox="0 0 63 39"><defs><radialGradient id="w29" gradientUnits="userSpaceOnUse" cx="38" cy="22" r="30"><stop offset="0" stop-color="#12283c"/><stop offset="1" stop-color="#060e18"/></radialGradient></defs><rect x="0" y="0" width="63" height="39" fill="url(#w29)"/><path d="M20 33l8-4 6-3 8-6 5-5 5-6" fill="none" stroke="#38b8c8" stroke-width="2.200" stroke-linecap="round" opacity=".9"/><path d="M34 26l8-7 4-4" stroke="#e040a0" stroke-width="1.200" opacity=".8"/><circle cx="43" cy="17" r="2" fill="#1a1a2a"/></svg>
<div class="lbl" style="left:871.00px;top:331.10px"><span>LOOKOUT_WALL</span><br>S_MPB (25).jpg</div>
<svg class="th" style="left:915.20px;top:292.40px" width="63" height="35" viewBox="0 0 63 35"><defs><linearGradient id="w30" gradientUnits="userSpaceOnUse" x1="0" y1="0" x2="63" y2="0"><stop offset="0" stop-color="#8c2a38"/><stop offset="0.25" stop-color="#a05870"/><stop offset="0.45" stop-color="#5a4a8c"/><stop offset="0.62" stop-color="#3a70c0"/><stop offset="0.8" stop-color="#b83a4c"/><stop offset="1" stop-color="#70304c"/></linearGradient></defs><rect x="0" y="0" width="63" height="35" fill="url(#w30)"/><ellipse cx="17" cy="16" rx="6" ry="12" fill="#e0b0c4" opacity=".8"/><path d="M14 8C30 12 40 22 58 32" stroke="#58c8f0" stroke-width="2.500" fill="none" opacity=".85"/><path d="M28 4C40 10 52 8 63 14" stroke="#e84858" stroke-width="4" fill="none" opacity=".8"/><ellipse cx="52" cy="12" rx="6" ry="3.500" fill="#f06870" opacity=".9"/><path d="M0 28C14 24 30 34 44 30" stroke="#c83040" stroke-width="4" fill="none" opacity=".7"/></svg>
<div class="lbl" style="left:947.30px;top:331.10px"><span>LOOKOUT_WALL</span><br>S_MPB (26).jpg</div>
<svg class="th" style="left:991.50px;top:292.40px" width="63" height="35" viewBox="0 0 63 35"><rect x="0" y="0" width="63" height="35" fill="#15282a"/><path d="M6 4C16 2 22 10 34 12S50 6 60 10 56 20 46 18 30 22 22 16 8 14 6 4z" fill="#5c7878" opacity=".75"/><ellipse cx="50" cy="12" rx="7" ry="4" fill="#b8c8c4" opacity=".8"/><ellipse cx="18" cy="8" rx="8" ry="3" fill="#8aa09c" opacity=".6"/><path d="M4 24C20 22 34 30 60 30" stroke="#2c4444" stroke-width="5" fill="none"/></svg>
<div class="lbl" style="left:1023.60px;top:331.10px"><span>LOOKOUT_WALL</span><br>S_MPB (27).jpg</div>
<svg class="th" style="left:1067.80px;top:292.40px" width="63" height="35" viewBox="0 0 63 35"><defs><linearGradient id="w31" gradientUnits="userSpaceOnUse" x1="0" y1="0" x2="0" y2="35"><stop offset="0" stop-color="#120a30"/><stop offset="0.5" stop-color="#281850"/><stop offset="0.62" stop-color="#503070"/><stop offset="0.8" stop-color="#6a4088"/><stop offset="1" stop-color="#3a2058"/></linearGradient></defs><rect x="0" y="0" width="63" height="35" fill="url(#w31)"/><path d="M0 20.500C6 19.500 12 20.500 20 22.500L0 23z" fill="#f8802a"/><path d="M0 19.600C5 18.800 9 19.400 13 20.400L0 21z" fill="#fcc040"/><polygon points="30,26 40,22 46,24 54,21 63,24 63,30 30,30" fill="#7a5090" opacity=".8"/></svg>
<div class="lbl" style="left:1099.90px;top:331.10px"><span>LOOKOUT_WALL</span><br>S_MPB (28).jpg</div>
<svg class="th" style="left:1144.10px;top:280.40px" width="63" height="47" viewBox="0 0 63 47"><defs><linearGradient id="w32" gradientUnits="userSpaceOnUse" x1="0" y1="0" x2="0" y2="47"><stop offset="0" stop-color="#262c34"/><stop offset="0.35" stop-color="#3e3c40"/><stop offset="0.55" stop-color="#80583c"/><stop offset="0.7" stop-color="#e87c24"/><stop offset="0.76" stop-color="#f89028"/><stop offset="0.8" stop-color="#6a3418"/><stop offset="1" stop-color="#140c0c"/></linearGradient><radialGradient id="w33" gradientUnits="userSpaceOnUse" cx="26" cy="34" r="16" gradientTransform="translate(0 17) scale(1 .5)"><stop offset="0" stop-color="#fcd060" stop-opacity="1"/><stop offset="0.4" stop-color="#f89830" stop-opacity="0.8"/><stop offset="1" stop-color="#f08020" stop-opacity="0"/></radialGradient></defs><rect x="0" y="0" width="63" height="47" fill="url(#w32)"/><rect x="0" y="0" width="63" height="47" fill="url(#w33)"/><path d="M17 12l4-2.500M49 14l4-3" stroke="#e8e8f0" stroke-width=".7"/><polygon points="0,38 10,37 16,35 20,37 30,38 40,36.5 50,38 63,37 63,47 0,47" fill="#1a1010"/></svg>
<div class="lbl" style="left:1176.20px;top:331.10px"><span>LOOKOUT_WALL</span><br>S_MPB (29).jpg</div>
<svg class="th" style="left:1220.40px;top:288.40px" width="63" height="39" viewBox="0 0 63 39"><defs><linearGradient id="w34" gradientUnits="userSpaceOnUse" x1="0" y1="0" x2="0" y2="39"><stop offset="0" stop-color="#dce8ec"/><stop offset="0.3" stop-color="#eef2f0"/><stop offset="0.6" stop-color="#f2ece0"/><stop offset="0.74" stop-color="#e8c890"/><stop offset="0.84" stop-color="#c89058"/><stop offset="1" stop-color="#d8b488"/></linearGradient></defs><rect x="0" y="0" width="63" height="39" fill="url(#w34)"/><ellipse cx="46" cy="7" rx="9" ry="4" fill="#ffffff" opacity=".7"/><ellipse cx="8" cy="3" rx="9" ry="3" fill="#b8d0dc" opacity=".6"/></svg>
<div class="lbl" style="left:1252.50px;top:331.10px"><span>LOOKOUT_WALL</span><br>S_MPB (30).jpg</div>
<svg class="th" style="left:1296.70px;top:292.40px" width="63" height="35" viewBox="0 0 63 35"><defs><linearGradient id="w35" gradientUnits="userSpaceOnUse" x1="0" y1="0" x2="63" y2="26"><stop offset="0" stop-color="#101838"/><stop offset="0.35" stop-color="#243a70"/><stop offset="0.55" stop-color="#a066a8"/><stop offset="0.72" stop-color="#744a80"/><stop offset="1" stop-color="#3a2848"/></linearGradient><linearGradient id="w36" gradientUnits="userSpaceOnUse" x1="0" y1="25" x2="0" y2="35"><stop offset="0" stop-color="#f8a83c"/><stop offset="0.2" stop-color="#3a70a8"/><stop offset="1" stop-color="#1c3c68"/></linearGradient></defs><rect x="0" y="0" width="63" height="35" fill="url(#w35)"/><rect x="0" y="26" width="63" height="9" fill="url(#w36)"/><path d="M22 4C30 10 38 16 46 24" stroke="#e8c0e0" stroke-width="2.200" opacity=".55"/><rect x="0" y="25.2" width="63" height="1.2" fill="#0c1020"/><path d="M0 26.500h20l-20 1z" fill="#40a8e8"/><rect x="50" y="27" width="1.500" height="6" fill="#fce8a0"/><rect x="56" y="27" width="1.200" height="5" fill="#fce8a0"/></svg>
<div class="lbl" style="left:1328.80px;top:331.10px"><span>LOOKOUT_WALL</span><br>S_MPB (31).jpg</div>
<svg class="th" style="left:1373.00px;top:292.40px" width="63" height="35" viewBox="0 0 63 35"><defs><linearGradient id="w37" gradientUnits="userSpaceOnUse" x1="0" y1="0" x2="0" y2="35"><stop offset="0" stop-color="#102c54"/><stop offset="0.5" stop-color="#1e4a84"/><stop offset="0.85" stop-color="#3a5c90"/><stop offset="0.93" stop-color="#6a5870"/><stop offset="1" stop-color="#0a0c14"/></linearGradient></defs><rect x="0" y="0" width="63" height="35" fill="url(#w37)"/><ellipse cx="44" cy="8" rx="14" ry="5" fill="#3a78c8" opacity=".5"/><path d="M5.500 6v28M55.500 12v22M22 24v10" stroke="#0c1828" stroke-width=".7"/><rect x="20" y="29" width="2.200" height="4" fill="#0a0e18"/><rect x="47" y="31" width="2.600" height="3" fill="#0a0e18"/><rect x="0" y="33.6" width="63" height="1.4" fill="#080a12"/></svg>
<div class="lbl" style="left:1405.10px;top:331.10px"><span>LOOKOUT_WALL</span><br>S_MPB (32).jpg</div>
<svg class="th" style="left:1449.30px;top:292.40px" width="63" height="35" viewBox="0 0 63 35"><defs><linearGradient id="w38" gradientUnits="userSpaceOnUse" x1="0" y1="0" x2="0" y2="24"><stop offset="0" stop-color="#741440"/><stop offset="0.5" stop-color="#a82448"/><stop offset="1" stop-color="#d84838"/></linearGradient><radialGradient id="w39" gradientUnits="userSpaceOnUse" cx="36" cy="22" r="14"><stop offset="0" stop-color="#f8902c" stop-opacity="1"/><stop offset="0.5" stop-color="#f8602c" stop-opacity="0.8"/><stop offset="1" stop-color="#e84838" stop-opacity="0"/></radialGradient></defs><rect x="0" y="0" width="63" height="35" fill="url(#w38)"/><rect x="0" y="0" width="63" height="35" fill="url(#w39)"/><path d="M12.500 2.500a3 3 0 1 0 1.500 5 3.600 3.600 0 0 1-1.500-5z" fill="#e8b0c0"/><polygon points="0,20 12,19.500 24,20.500 36,23 48,20.500 63,19 63,35 0,35" fill="#4c2c60"/><polygon points="0,26 20,25 40,27 63,25 63,35 0,35" fill="#3c2250"/><rect x="0" y="31" width="63" height="4" fill="#301a44"/></svg>
<div class="lbl" style="left:1481.40px;top:331.10px"><span>LOOKOUT_WALL</span><br>S_MPB (33).jpg</div>
<svg class="th" style="left:1525.60px;top:292.40px" width="63" height="35" viewBox="0 0 63 35"><defs><linearGradient id="w40" gradientUnits="userSpaceOnUse" x1="0" y1="0" x2="0" y2="14"><stop offset="0" stop-color="#4a2478"/><stop offset="0.6" stop-color="#b03060"/><stop offset="1" stop-color="#f07030"/></linearGradient></defs><rect x="0" y="0" width="63" height="35" fill="url(#w40)"/><circle cx="46" cy="11.500" r="2.400" fill="#fce060"/><circle cx="46" cy="11.500" r="4.500" fill="#f8a030" opacity=".5"/><polygon points="14,12 22,9 28,12 34,10 40,13 30,16" fill="#a04050"/><polygon points="0,7 8,11 18,14 28,18 36,16 44,13 52,10 63,8 63,35 0,35" fill="#3a1a58"/><polygon points="0,16 10,18 22,24 26,30 63,35 0,35" fill="#1c0c3c"/><polygon points="63,12 50,15 40,18 34,26 30,32 63,35" fill="#240e40"/><polygon points="36,17 38,18 33,24 29,30 22,32 20,30 27,26 31,20" fill="#6a9ce0"/><rect x="0" y="33.5" width="63" height="1.5" fill="#0c0620"/></svg>
<div class="lbl" style="left:1557.70px;top:331.10px"><span>LOOKOUT_WALL</span><br>S_MPB (34).jpg</div>
<svg class="th" style="left:1601.90px;top:292.40px" width="63" height="35" viewBox="0 0 63 35"><rect x="0" y="0" width="63" height="35" fill="#06061c"/><path d="M22 13.500l5-2.500 5 1 4-1.500 3 2.500-1 3.500 1 3-4 2.500-5-.5-5 1-2-3 1-3z" fill="#4a7cd0"/><ellipse cx="31" cy="16.500" rx="6" ry="2.600" fill="#e0f0fc"/><ellipse cx="30" cy="13.500" rx="4" ry="1.300" fill="#b8d8f8"/></svg>
<div class="lbl" style="left:1634.00px;top:331.10px"><span>LOOKOUT_WALL</span><br>S_MPB (35).jpg</div>
<svg class="th" style="left:686.30px;top:384.60px" width="63" height="35" viewBox="0 0 63 35"><defs><linearGradient id="w41" gradientUnits="userSpaceOnUse" x1="0" y1="0" x2="0" y2="16"><stop offset="0" stop-color="#1260c4"/><stop offset="1" stop-color="#3a94e4"/></linearGradient></defs><rect x="0" y="0" width="63" height="35" fill="url(#w41)"/><ellipse cx="40" cy="13" rx="6" ry="2.800" fill="#f8e848"/><ellipse cx="40" cy="12.500" rx="11" ry="4.500" fill="#70b8e8" opacity=".45"/><polygon points="0,10 4,12 10,13 0,14" fill="#f4f8fc"/><polygon points="63,9 58,12 52,13 63,14" fill="#f4f8fc"/><polygon points="0,14 8,16 16,15 24,17 30,12 36,16 44,15 52,14 63,11 63,35 0,35" fill="#1c5490"/><polygon points="0,18 10,17 20,22 30,20 42,21 52,18 63,17 63,35 0,35" fill="#153c68"/><path d="M16 28C20 24 28 26 32 23S44 25 46 28 38 32 30 31 18 32 16 28z" fill="#6aa4e0"/><polygon points="0,24 8,26 16,31 30,33 46,31 56,27 63,28 63,35 0,35" fill="#0a1c30"/></svg>
<div class="lbl" style="left:718.40px;top:423.30px"><span>LOOKOUT_WALL</span><br>S_MPB (36).jpg</div>
<svg class="th" style="left:762.60px;top:384.60px" width="63" height="35" viewBox="0 0 63 35"><defs><linearGradient id="w42" gradientUnits="userSpaceOnUse" x1="0" y1="0" x2="0" y2="22"><stop offset="0" stop-color="#32264e"/><stop offset="0.5" stop-color="#5a3258"/><stop offset="0.85" stop-color="#c85838"/><stop offset="1" stop-color="#f08030"/></linearGradient></defs><rect x="0" y="0" width="63" height="35" fill="url(#w42)"/><circle cx="34.500" cy="19" r="1.600" fill="#fcd870"/><polygon points="0,16 10,18 20,21 30,22 40,22 50,19 63,16 63,35 0,35" fill="#5a2c48"/><polygon points="0,35 0,14 2,10 4,15 6,11 9,18 12,15 14,22 20,26 63,35" fill="#2a1a3a"/><polygon points="63,35 63,12 60,16 58,10 55,17 52,13 50,20 46,24 40,35" fill="#2a1a3a"/><ellipse cx="32" cy="27" rx="7" ry="2.200" fill="#d8683a"/><rect x="0" y="30" width="63" height="5" fill="#241732"/></svg>
<div class="lbl" style="left:794.70px;top:423.30px"><span>LOOKOUT_WALL</span><br>S_MPB (37).jpg</div>
<svg class="th" style="left:838.90px;top:384.60px" width="63" height="35" viewBox="0 0 63 35"><rect x="0" y="0" width="63" height="35" fill="#fdd9c8"/><polygon points="0,13 4,12 8,13.500 12,11.500 16,13 20,12 24,13 28,11 32,12.500 36,11.500 40,13 44,11.500 48,13 52,12 56,13 60,11.500 63,12.500 63,35 0,35" fill="#f08048"/><polygon points="0,16 3,14 6,16.500 9,14.500 12,17 15,14.500 18,17 21,15 24,17 27,14.500 30,17 33,15 36,17 39,14.500 42,17 45,15 48,17 51,14.500 54,17 57,15 60,17 63,15 63,35 0,35" fill="#c03428"/><rect x="0" y="19" width="63" height="5" fill="#8a2228"/><rect x="0" y="23" width="63" height="12" fill="#4c1428"/><rect x="30.600" y="11" width="2.800" height="2.200" fill="#5a1c20"/><rect x="31.700" y="13" width=".6" height="4" fill="#5a1c20"/></svg>
<div class="lbl" style="left:871.00px;top:423.30px"><span>LOOKOUT_WALL</span><br>S_MPB (38).jpg</div>
<svg class="th" style="left:915.20px;top:384.60px" width="63" height="35" viewBox="0 0 63 35"><defs><linearGradient id="w43" gradientUnits="userSpaceOnUse" x1="0" y1="0" x2="0" y2="35"><stop offset="0" stop-color="#24233f"/><stop offset="0.35" stop-color="#463e66"/><stop offset="0.6" stop-color="#9c7896"/><stop offset="0.75" stop-color="#c8a6b6"/><stop offset="1" stop-color="#6a5c78"/></linearGradient></defs><rect x="0" y="0" width="63" height="35" fill="url(#w43)"/><circle cx="31" cy="5" r=".9" fill="#f0f0f8"/><polygon points="14,22 24,16 30,13 36,16 48,22" fill="#5a4a70"/><polygon points="26,16 30,13 35,16 42,20 30,19" fill="#ecd8e4"/><rect x="0" y="21.5" width="63" height="5.5" fill="#cdb0c4" opacity=".75"/><polygon points="0,35 0,24 3,20 5,26 8,22 11,29 18,33 63,35" fill="#2a2440"/><polygon points="63,35 63,22 60,16 58,23 55,18 52,27 46,32 30,35" fill="#2a2440"/></svg>
<div class="lbl" style="left:947.30px;top:423.30px"><span>LOOKOUT_WALL</span><br>S_MPB (39).jpg</div>
<svg class="th" style="left:991.50px;top:384.60px" width="63" height="35" viewBox="0 0 63 35"><defs><linearGradient id="w44" gradientUnits="userSpaceOnUse" x1="0" y1="0" x2="63" y2="35"><stop offset="0" stop-color="#1a0c5c"/><stop offset="0.4" stop-color="#501868"/><stop offset="0.7" stop-color="#901c4c"/><stop offset="1" stop-color="#c02438"/></linearGradient></defs><rect x="0" y="0" width="63" height="35" fill="url(#w44)"/><circle cx="14.500" cy="12.500" r="6" fill="#8c7cb0"/><circle cx="14.500" cy="12.500" r="6" fill="none" stroke="#c8c0dc" stroke-width=".5"/><path d="M7 20L21 7" stroke="#e8e0f0" stroke-width=".5"/></svg>
<div class="lbl" style="left:1023.60px;top:423.30px"><span>LOOKOUT_WALL</span><br>S_MPB (40).jpg</div>
<svg class="th" style="left:1067.80px;top:384.60px" width="63" height="35" viewBox="0 0 63 35"><defs><linearGradient id="w45" gradientUnits="userSpaceOnUse" x1="0" y1="0" x2="0" y2="35"><stop offset="0" stop-color="#1860b0"/><stop offset="0.4" stop-color="#2a7cc4"/><stop offset="0.5" stop-color="#1c5a94"/><stop offset="0.7" stop-color="#1a78b0"/><stop offset="1" stop-color="#1a6aa4"/></linearGradient><radialGradient id="w46" gradientUnits="userSpaceOnUse" cx="6" cy="13" r="16" gradientTransform="translate(0 9.750) scale(1 .25)"><stop offset="0" stop-color="#f84838" stop-opacity="1"/><stop offset="0.6" stop-color="#f85048" stop-opacity="0.8"/><stop offset="1" stop-color="#f85048" stop-opacity="0"/></radialGradient></defs><rect x="0" y="0" width="63" height="35" fill="url(#w45)"/><polygon points="0,6 14,9 30,12 0,14" fill="#f85848" opacity=".9"/><ellipse cx="7" cy="13" rx="5" ry="2.600" fill="#f8e440"/><polygon points="14,17 30,11 38,7 46,12 56,15 63,17 63,19 0,19 0,16" fill="#1c5894"/><polygon points="36,8.500 38,7 42,9.500 39,10" fill="#e8f0f8"/><rect x="0" y="19" width="63" height="16" fill="#1a70ac"/><rect x="0" y="24" width="63" height="1.2" fill="#2888c0" opacity=".6"/></svg>
<div class="lbl" style="left:1099.90px;top:423.30px"><span>LOOKOUT_WALL</span><br>S_MPB (41).jpg</div>
<svg class="th" style="left:1144.10px;top:380.60px" width="63" height="39" viewBox="0 0 63 39"><rect x="0" y="0" width="63" height="39" fill="#2f7fe6"/><polygon points="0,21 7,15 22,13 22,39 0,39" fill="#fbe9d2"/><polygon points="22,13 28,14 28,39 22,39" fill="#8c7ca8"/><polygon points="28,16 40,13 54,20 54,39 28,39" fill="#fbe9d2"/><polygon points="44,14 56,21 63,28 63,39 44,39" fill="#685078"/><rect x="30" y="17" width="2.200" height="4" fill="#4a3c60"/><polygon points="4,24 7,23 7,39 4,39" fill="#b8a8c8"/></svg>
<div class="lbl" style="left:1176.20px;top:423.30px"><span>LOOKOUT_WALL</span><br>S_MPB (42).jpg</div>
<svg class="th" style="left:1220.40px;top:380.60px" width="63" height="39" viewBox="0 0 63 39"><rect x="0" y="0" width="63" height="39" fill="#2050b8"/><path d="M22 0C34 6 50 4 63 0V6C50 9 38 9 28 6L26 14 22 12z" fill="#2ee070"/><polygon points="0,16 10,15 20,18 30,15 42,13 52,16 63,19 63,30 0,30" fill="#102c6c"/><polygon points="0,21 8,19 18,22 28,26 0,30" fill="#16388c"/><polygon points="0,28 30,25 63,20 63,39 0,39" fill="#86b0ee"/><polygon points="18,39 40,26 63,23 63,39" fill="#5c8cd8"/><rect x="27.500" y="25.500" width="3.500" height="2" fill="#f0e0d8"/><rect x="27.500" y="25" width="3.500" height=".8" fill="#c83030"/></svg>
<div class="lbl" style="left:1252.50px;top:423.30px"><span>LOOKOUT_WALL</span><br>S_MPB (43).jpg</div>
<svg class="th" style="left:1296.70px;top:380.60px" width="63" height="39" viewBox="0 0 63 39"><defs><linearGradient id="w47" gradientUnits="userSpaceOnUse" x1="0" y1="0" x2="63" y2="0"><stop offset="0" stop-color="#0a4852"/><stop offset="0.6" stop-color="#1a626a"/><stop offset="1" stop-color="#2a6e76"/></linearGradient></defs><rect x="0" y="0" width="63" height="39" fill="url(#w47)"/><ellipse cx="50.500" cy="10.500" rx="3.400" ry="1.400" fill="#f0f8f8"/><rect x="49.300" y="11.500" width="2.400" height="19" fill="#d8ecec" opacity=".8"/><circle cx="50.500" cy="34" r=".6" fill="#f0f8f8"/></svg>
<div class="lbl" style="left:1328.80px;top:423.30px"><span>LOOKOUT_WALL</span><br>S_MPB (44).jpg</div>
<svg class="th" style="left:1373.00px;top:380.60px" width="63" height="39" viewBox="0 0 63 39"><rect x="0" y="0" width="63" height="39" fill="#0c0616"/><path d="M3 9C12 16 18 20 26 17S32 10 36 18 46 24 50 22 58 28 62 31" fill="none" stroke="#e85048" stroke-width="2" stroke-linecap="round" opacity=".9"/><path d="M24 14l4 6 6-2" stroke="#f8a040" stroke-width="1.600" fill="none"/><circle cx="31" cy="19" r="1.200" fill="#f8e060"/><path d="M3 9C12 16 18 20 26 17" stroke="#a03060" stroke-width="3.500" opacity=".35" fill="none"/></svg>
<div class="lbl" style="left:1405.10px;top:423.30px"><span>LOOKOUT_WALL</span><br>S_MPB (45).jpg</div>
<svg class="th" style="left:1449.30px;top:380.60px" width="63" height="39" viewBox="0 0 63 39"><defs><linearGradient id="w48" gradientUnits="userSpaceOnUse" x1="0" y1="0" x2="63" y2="0"><stop offset="0" stop-color="#9c2090"/><stop offset="0.45" stop-color="#881880"/><stop offset="0.8" stop-color="#500c48"/><stop offset="1" stop-color="#3a0830"/></linearGradient><radialGradient id="w49" gradientUnits="userSpaceOnUse" cx="8" cy="30" r="26"><stop offset="0" stop-color="#f0a0e8" stop-opacity="1"/><stop offset="0.4" stop-color="#e060d0" stop-opacity="0.8"/><stop offset="1" stop-color="#c040b0" stop-opacity="0"/></radialGradient></defs><rect x="0" y="0" width="63" height="39" fill="url(#w48)"/><rect x="0" y="0" width="63" height="39" fill="url(#w49)"/><ellipse cx="6" cy="11" rx="2.600" ry="1.200" fill="#f080e0"/><ellipse cx="30" cy="26" rx="2" ry="1.500" fill="#f86848" opacity=".8"/><ellipse cx="46" cy="15" rx="1.600" ry="1" fill="#e050c0"/><ellipse cx="54" cy="17" rx="1.600" ry="1.800" fill="#d048b0"/><ellipse cx="61" cy="17" rx="2" ry="3" fill="#c03c70" opacity=".8"/></svg>
<div class="lbl" style="left:1481.40px;top:423.30px"><span>LOOKOUT_WALL</span><br>S_MPB (46).jpg</div>
<svg class="th" style="left:1525.60px;top:380.60px" width="63" height="39" viewBox="0 0 63 39"><defs><linearGradient id="w50" gradientUnits="userSpaceOnUse" x1="0" y1="0" x2="63" y2="0"><stop offset="0" stop-color="#2c8e9c"/><stop offset="0.45" stop-color="#8cc8bc"/><stop offset="0.75" stop-color="#e8e0c0"/><stop offset="1" stop-color="#d8c8a0"/></linearGradient><radialGradient id="w51" gradientUnits="userSpaceOnUse" cx="31" cy="16" r="40"><stop offset="0" stop-color="#000000" stop-opacity="0"/><stop offset="0.6" stop-color="#08181c" stop-opacity="0.15"/><stop offset="1" stop-color="#08181c" stop-opacity="0.8"/></radialGradient></defs><rect x="0" y="0" width="63" height="39" fill="url(#w50)"/><polygon points="0,25 63,24 63,39 0,39" fill="#5c5448"/><polygon points="28,25 35,25 46,39 14,39" fill="#3c3834"/><path d="M31.500 27V39" stroke="#e86020" stroke-width=".9"/><polygon points="45,12 48,11 50,16 49,24 47,24 47,17" fill="#2c3430"/><rect x="0" y="0" width="63" height="39" fill="url(#w51)"/><path d="M31.500 6.500L38 17.500H25z" fill="none" stroke="#c04830" stroke-width="1.500"/><path d="M21.500 14.500L15.500 35.500H47.500L41.500 14.500" fill="none" stroke="#c8ece4" stroke-width="1.400"/><path d="M26 15h11l-5.500 9z" fill="#f4f4f0" opacity=".85"/></svg>
<div class="lbl" style="left:1557.70px;top:423.30px"><span>LOOKOUT_WALL</span><br>S_MPB (47).jpg</div>
<svg class="th" style="left:1601.90px;top:380.60px" width="63" height="39" viewBox="0 0 63 39"><defs><linearGradient id="w52" gradientUnits="userSpaceOnUse" x1="0" y1="0" x2="63" y2="0"><stop offset="0" stop-color="#b8b8c0"/><stop offset="0.5" stop-color="#e0e0e6"/><stop offset="1" stop-color="#c8c8d0"/></linearGradient></defs><rect x="0" y="0" width="63" height="39" fill="url(#w52)"/><path d="M30 8l5-2 3 4-2 6 3 4-4 8-4-2 2-6-3-5z" fill="#5a6088"/><path d="M28 26l8-4 4-6" stroke="#30b0e8" stroke-width="2.500" fill="none"/></svg>
<div class="lbl" style="left:1634.00px;top:423.30px"><span>LOOKOUT_WALL</span><br>S_MPB (48).jpg</div>
<div class="a" style="left:1679.50px;top:286.00px;width:1.00px;height:124.00px;background:#3a96ee"></div>
<div class="t" style="left:570.60px;top:490.80px;color:#444;"><i>52</i>개 항목</div>
<div class="a" style="left:613.20px;top:484.60px;width:0.80px;height:12.00px;background:#f1f1f1"></div>
<div class="t" style="left:621.30px;top:490.80px;color:#444;"><i>1</i>개 항목 선택함 <i>969KB</i></div>
<div class="a" style="left:711.20px;top:484.60px;width:0.80px;height:12.00px;background:#f1f1f1"></div>
<div class="a" style="left:560.60px;top:502.40px;width:1119.40px;height:460.60px;background:#fff;box-shadow:0 0 3px rgba(0,0,0,.12)"></div>
<div class="a" style="left:560.60px;top:502.40px;width:1119.40px;height:20.60px;background:#6b6b6b"></div>
<svg style="left:567.20px;top:507.40px" width="11.00" height="10.40" viewBox="0 0 11 10.400"><rect x=".3" y="2" width="9.400" height="6.400" fill="#3a2ad8"/><path d="M.3 2h9.400v3.400L5 8.400H.3z" fill="#3ab4f0"/><path d="M.3 8.400L9.700 2v6.400z" fill="#4a28e0"/><path d="M4 7l6.400-6.600.4.400L5.200 8z" fill="#e8ecf4"/><rect x="3" y="9.200" width="4.400" height=".8" fill="#b8c4d8"/></svg>
<div class="t" style="left:582.00px;top:512.70px;color:#a2a2a2;">개인 설정</div>
<div class="a" style="left:1596.40px;top:512.60px;width:7.40px;height:0.90px;background:#9a9a9a"></div>
<svg style="left:570.20px;top:533.70px" width="8.40" height="7.20" viewBox="0 0 14 12"><path d="M6 1L1 6l5 5M1 6h12.400" fill="none" stroke="#c4c4c4" stroke-width="2"/></svg><svg style="left:590.70px;top:533.70px" width="8.40" height="7.20" viewBox="0 0 14 12"><path d="M8 1l5 5-5 5M13 6H.6" fill="none" stroke="#cdcdcd" stroke-width="1.900"/></svg><svg style="left:609.50px;top:535.70px" width="4.40" height="2.60" viewBox="0 0 8 5"><path d="M.6.6L4 4 7.400.6" fill="none" stroke="#c4c4c4" stroke-width="1.300"/></svg><svg style="left:622.40px;top:532.90px" width="7.60" height="8.80" viewBox="0 0 12 14"><path d="M1 6l5-5 5 5M6 1v12.600" fill="none" stroke="#505050" stroke-width="2"/></svg>
<div class="a" style="left:635.40px;top:527.40px;width:886.20px;height:20.40px;border:1px solid #d9d9d9;background:#fff"></div>
<div class="a" style="left:1498.20px;top:527.40px;width:0.90px;height:20.40px;background:#d9d9d9"></div>
<svg style="left:637.40px;top:531.40px" width="11.60" height="11.00" viewBox="0 0 11 10.400"><rect x=".3" y="2" width="9.400" height="6.400" fill="#3a2ad8"/><path d="M.3 2h9.400v3.400L5 8.400H.3z" fill="#3ab4f0"/><path d="M.3 8.400L9.700 2v6.400z" fill="#4a28e0"/><path d="M4 7l6.400-6.600.4.400L5.200 8z" fill="#e8ecf4"/><rect x="3" y="9.200" width="4.400" height=".8" fill="#8a9ab8"/></svg>
<svg style="left:654.40px;top:535.20px" width="3.00" height="5.00" viewBox="0 0 3 5"><path d="M.5.5l2 2-2 2" fill="none" stroke="#666" stroke-width=".9"/></svg>
<div class="t" style="left:663.60px;top:537.40px;color:#3a3a3a;">개인 설정</div>
<svg style="left:1484.20px;top:536.00px" width="6.20" height="4.20" viewBox="0 0 10 6.600"><path d="M.8.8L5 5.400 9.200.8" fill="none" stroke="#444" stroke-width="2.0"/></svg>
<svg style="left:1505.70px;top:532.80px" width="9.00" height="9.60" viewBox="0 0 9 9.600"><path d="M7.300 3.500A3.300 3.300 0 1 1 4.200 2.100" fill="none" stroke="#6a6a6a" stroke-width="1.150"/><path d="M3.300.5l3.100.2-.7 2.900z" fill="#6a6a6a"/></svg>
<div class="a" style="left:1530.20px;top:527.40px;width:141.00px;height:20.40px;border:1px solid #d9d9d9;background:#fff"></div>
<div class="t" style="left:1536.60px;top:537.40px;color:#8c8c8c;">제어판 검색</div>
<div class="t" style="left:582.00px;top:567.90px;color:#1e3287;">제어판 홈</div>
<div class="t" style="left:582.00px;top:592.90px;color:#1e3287;">바탕 화면 아이콘 변경</div>
<div class="t" style="left:582.00px;top:609.20px;color:#1e3287;">마우스 포인터 변경</div>
<div class="t" style="left:718.20px;top:576.00px;color:#1f4fb2;font-size:11.3px;letter-spacing:.54px">컴퓨터의 화면 효과 및 소리 변경</div>
<div class="t" style="left:718.20px;top:593.00px;color:#111;">바탕 화면의 배경<i>,</i> 색<i>,</i> 소리 및 화면 보호기를 모두 한 번에 변경하려면 테마를 클릭하십시오<i>.</i></div>
<div class="a" style="left:717.20px;top:602.50px;width:955.00px;height:274.10px;border:1.3px solid #a4a6aa;background:#fff"></div>
<div class="a" style="left:725.10px;top:603.80px;width:95.10px;height:33.00px;background:#cce8ff"></div>
<div class="a" style="left:728.90px;top:603.80px;width:44.10px;height:15.20px;background:linear-gradient(135deg,#6db4ee,#2f86d8);border:.6px solid #9ac6ee"></div>
<div class="tc" style="left:772.00px;top:629.00px;color:#111"><i>Windows</i></div>
<div class="t" style="left:725.10px;top:649.20px;color:#1e3287;">설치된 테마 <i>(14)</i></div>
<div class="a" style="left:789.50px;top:649.20px;width:792.30px;height:0.80px;background:#e4e4e4"></div>
<div class="a" style="left:749.40px;top:669.10px;width:67.40px;height:41.70px;background:#2b3445;border:.7px solid #2b3445"></div><div class="a" style="left:728.90px;top:688.20px;width:43.40px;height:43.10px;background:linear-gradient(135deg,#8c8c8c 0%,#4a4a4a 45%,#0c0c0c 100%);border:.8px solid #9a9a9a"></div><div class="tc" style="left:772.50px;top:741.40px;color:#111"><i>Fluent Dark Mode No</i></div><div class="tc" style="left:772.50px;top:751.90px;color:#111"><i>Addressbar</i></div>
<div class="a" style="left:844.55px;top:669.10px;width:67.40px;height:41.70px;background:#2b3445;border:.7px solid #2b3445"></div><div class="a" style="left:824.05px;top:688.20px;width:43.40px;height:43.10px;background:linear-gradient(135deg,#8c8c8c 0%,#4a4a4a 45%,#0c0c0c 100%);border:.8px solid #9a9a9a"></div><div class="tc" style="left:867.65px;top:741.40px;color:#111"><i>Fluent Dark Mode</i></div>
<div class="a" style="left:939.70px;top:669.10px;width:67.40px;height:41.70px;background:#2b3445;border:.7px solid #2b3445"></div><div class="a" style="left:919.20px;top:688.20px;width:43.40px;height:43.10px;background:#fff;border:.8px solid #c6c6c6"></div><div class="tc" style="left:962.80px;top:741.40px;color:#111"><i>Fluent Day No</i></div><div class="tc" style="left:962.80px;top:751.90px;color:#111"><i>Addressbar</i></div>
<div class="a" style="left:1034.85px;top:669.10px;width:67.40px;height:41.70px;background:#2b3445;border:.7px solid #2b3445"></div><div class="a" style="left:1014.35px;top:688.20px;width:43.40px;height:43.10px;background:#fff;border:.8px solid #c6c6c6"></div><div class="tc" style="left:1057.95px;top:741.40px;color:#111"><i>Fluent Day</i></div>
<div class="a" style="left:1130.00px;top:669.10px;width:67.40px;height:41.70px;background:#1c1c1c;border:.7px solid #1c1c1c"></div><div class="a" style="left:1109.50px;top:688.20px;width:43.40px;height:43.10px;background:linear-gradient(135deg,#8c8c8c 0%,#4a4a4a 45%,#0c0c0c 100%);border:.8px solid #9a9a9a"></div><div class="tc" style="left:1153.10px;top:741.40px;color:#111"><i>Fluent Night No</i></div><div class="tc" style="left:1153.10px;top:751.90px;color:#111"><i>Addressbar</i></div>
<div class="a" style="left:1225.15px;top:669.10px;width:67.40px;height:41.70px;background:#1c1c1c;border:.7px solid #1c1c1c"></div><div class="a" style="left:1204.65px;top:688.20px;width:43.40px;height:43.10px;background:linear-gradient(135deg,#8c8c8c 0%,#4a4a4a 45%,#0c0c0c 100%);border:.8px solid #9a9a9a"></div><div class="tc" style="left:1248.25px;top:741.40px;color:#111"><i>Fluent Night</i></div>
<div class="a" style="left:1320.30px;top:669.10px;width:67.40px;height:41.70px;background:#c3cdd4;border:.7px solid #98a2aa"></div><div class="a" style="left:1299.80px;top:688.20px;width:43.40px;height:43.10px;background:linear-gradient(135deg,#8dbcf2 0%,#3f8ee0 55%,#1a6fd2 100%);border:.8px solid #7aa6dc"></div><div class="tc" style="left:1343.40px;top:741.40px;color:#111"><i>Papyros Blue</i></div>
<div class="a" style="left:1415.45px;top:669.10px;width:67.40px;height:41.70px;background:#c3cdd4;border:.7px solid #98a2aa"></div><div class="a" style="left:1394.95px;top:688.20px;width:43.40px;height:43.10px;background:linear-gradient(135deg,#84dcdc 0%,#2cb8bc 55%,#08a0a8 100%);border:.8px solid #6cc4c4"></div><div class="tc" style="left:1438.55px;top:741.40px;color:#111"><i>Papyros Green</i></div>
<div class="a" style="left:1510.60px;top:669.10px;width:67.40px;height:41.70px;background:#c3cdd4;border:.7px solid #98a2aa"></div><div class="a" style="left:1490.10px;top:688.20px;width:43.40px;height:43.10px;background:linear-gradient(135deg,#f2a2a2 0%,#e45858 55%,#d82e2e 100%);border:.8px solid #e08a8a"></div><div class="tc" style="left:1533.70px;top:741.40px;color:#111"><i>Papyros Red</i></div>
<div class="a" style="left:749.40px;top:768.10px;width:67.40px;height:41.70px;background:#c3cdd4;border:.7px solid #98a2aa"></div><div class="a" style="left:728.90px;top:787.20px;width:43.40px;height:43.10px;background:linear-gradient(135deg,#fcca7c 0%,#f6a42e 55%,#f08c04 100%);border:.8px solid #e8a850"></div><div class="tc" style="left:772.50px;top:839.80px;color:#111"><i>Papyros Yellow</i></div>
<div class="a" style="left:844.55px;top:768.10px;width:67.40px;height:41.70px;background:#c3cdd4;border:.7px solid #98a2aa"></div><div class="a" style="left:824.05px;top:787.20px;width:43.40px;height:43.10px;background:linear-gradient(135deg,#93a1aa 0%,#5e707a 50%,#3c4c56 100%);border:.8px solid #8a98a0"></div><div class="tc" style="left:867.65px;top:839.80px;color:#111"><i>Papyros</i></div>
<div class="a" style="left:939.70px;top:768.10px;width:67.40px;height:41.70px;background:#f7f7fa;border:.7px solid #a8a8ae"></div><div class="a" style="left:919.20px;top:787.20px;width:43.40px;height:43.10px;background:linear-gradient(135deg,#8f959c 0%,#566068 45%,#27333c 100%);border:.8px solid #7a8088"></div><div class="tc" style="left:962.80px;top:839.80px;color:#111"><i>Porcelain 1</i></div>
<div class="a" style="left:1034.85px;top:768.10px;width:67.40px;height:41.70px;background:#f7f7fa;border:.7px solid #a8a8ae"></div><div class="a" style="left:1014.35px;top:787.20px;width:43.40px;height:43.10px;background:linear-gradient(135deg,#8f959c 0%,#566068 45%,#27333c 100%);border:.8px solid #7a8088"></div><div class="tc" style="left:1057.95px;top:839.80px;color:#111"><i>Porcelain 2</i></div>
<div class="a" style="left:1130.00px;top:768.10px;width:67.40px;height:41.70px;background:#f7f7fa;border:.7px solid #a8a8ae"></div><div class="a" style="left:1109.50px;top:787.20px;width:43.40px;height:43.10px;background:linear-gradient(135deg,#8f959c 0%,#566068 45%,#27333c 100%);border:.8px solid #7a8088"></div><div class="tc" style="left:1153.10px;top:839.80px;color:#111"><i>Porcelain 3</i></div>
<div class="t" style="left:725.10px;top:860.60px;color:#1e3287;">고대비 테마 <i>(0)</i></div>
<div class="a" style="left:785.20px;top:860.40px;width:699.30px;height:0.80px;background:#e4e4e4"></div>
<div class="a" style="left:1659.80px;top:603.80px;width:11.40px;height:271.80px;background:#f0f0f0"></div>
<div class="a" style="left:1660.80px;top:614.00px;width:9.40px;height:250.60px;background:#cdcdcd"></div>
<svg style="left:1663.00px;top:868.60px" width="5.20" height="3.40" viewBox="0 0 5.200 3.400"><path d="M.4.4l2.200 2.400L4.800.4" fill="none" stroke="#505050" stroke-width="1"/></svg>
<div class="t" style="left:582.00px;top:895.60px;color:#8a8a8a;">참고 항목</div>
<div class="t" style="left:582.00px;top:911.60px;color:#1e3287;">디스플레이</div>
<div class="t" style="left:582.00px;top:927.50px;color:#1e3287;">작업 표시줄 및 탐색</div>
<div class="t" style="left:582.00px;top:943.90px;color:#1e3287;">접근성 센터</div>
<div class="a" style="left:811.20px;top:891.30px;width:50.70px;height:33.00px;background:radial-gradient(ellipse 1.6px 1.6px at 50% 50%,#fff 60%,transparent 100%),radial-gradient(ellipse 30px 22px at 52% 56%,rgba(238,190,214,.95) 0%,rgba(214,140,196,.6) 45%,rgba(190,120,200,0) 100%),radial-gradient(ellipse 14px 14px at 84% 66%,rgba(70,34,84,.8) 0%,rgba(60,24,84,0) 100%),linear-gradient(180deg,rgba(0,0,0,0) 45%,rgba(46,14,88,.9) 96%),linear-gradient(100deg,#4e49e6 0%,#6d5eec 35%,#8a6af0 70%,#8666ee 100%);box-shadow:0 0 1.5px rgba(0,0,0,.35)"></div>
<div class="tc" style="left:836.60px;top:933.40px;color:#1a6fd6;">바탕 화면 배경</div>
<div class="tc" style="left:836.60px;top:946.70px;color:#7a7a7a;"><i>Harmony</i></div>
<div class="a" style="left:1058.40px;top:891.30px;width:33.40px;height:33.00px;background:linear-gradient(135deg,#a6d4f8 0%,#6cb4f0 50%,#3a98e8 100%);border:.6px solid #8cbce8"></div>
<div class="tc" style="left:1075.10px;top:933.40px;color:#1a6fd6;">색</div>
<div class="tc" style="left:1075.10px;top:946.70px;color:#7a7a7a;">색 <i>3</i></div>
<svg style="left:1296.60px;top:891.00px" width="34.40" height="33.00" viewBox="0 0 34.400 33"><path d="M.5 26.500l16.500-9 16.500 6v2.400l-16.500 7-16.500-4z" fill="#1a1a1a"/><path d="M3.400 25.600l13.800-7.200 12.600 4.600-13.400 6.600z" fill="#ececec"/><path d="M8.500 22.800l8.500-4.400 7.600 2.800-8.200 4z" fill="#2a2a2a"/><path d="M11 23.400l7-3.600M14 24.400l7-3.400M17 25.200l6.600-3.200" stroke="#d8d8d8" stroke-width=".7"/><g fill="#1e90e8"><ellipse cx="6.600" cy="14.600" rx="2.500" ry="1.900"/><rect x="8.100" y="8" width="1.300" height="6.800"/><path d="M8.100 7.400c2.200.4 3.400 2 3 4.200-.6-1.200-1.600-2-3-2.200z"/><ellipse cx="15.600" cy="9.800" rx="3.200" ry="2.400"/><rect x="17.500" y="1" width="1.500" height="9"/><path d="M17.500 0c3 .6 4.600 2.800 4 6-.8-1.800-2-3-4-3.400z"/><ellipse cx="25.600" cy="16" rx="4" ry="3"/><rect x="28.100" y="3" width="1.700" height="13"/><path d="M28.100 2c3.600.8 5.600 3.600 4.800 7.400-.8-2.200-2.400-3.600-4.800-4.200z"/></g><ellipse cx="14.800" cy="9" rx="1.400" ry=".8" fill="#8ccaf8"/><ellipse cx="24.600" cy="15" rx="1.800" ry="1" fill="#8ccaf8"/></svg>
<div class="tc" style="left:1313.70px;top:933.40px;color:#1a6fd6;">소리</div>
<div class="tc" style="left:1313.70px;top:946.70px;color:#7a7a7a;">로드 중</div>
<svg style="left:1534.60px;top:891.00px" width="33.60" height="33.00" viewBox="0 0 33.600 33"><path d="M2.500 3.500L25 0l2.500 19.500-21 4z" fill="#aab6c0"/><path d="M4.500 5.200L23.400 2.200l2 15.600-17.600 3.400z" fill="#4a9ac8"/><path d="M4.500 5.200L23.400 2.200l.8 6.400L5.600 12z" fill="#6cc4d4"/><path d="M12 23l9-1.600 3 5.600-13 2.400z" fill="#b4bec8"/><ellipse cx="17.500" cy="29.600" rx="8" ry="2" fill="#c8d0d8"/><circle cx="29" cy="20.500" r="2.400" fill="#dff4fc" stroke="#8cd0f0" stroke-width=".7"/><circle cx="31" cy="26.600" r="1.700" fill="#f8e0f4" stroke="#e0a0d8" stroke-width=".6"/><circle cx="26.600" cy="29.400" r="1.900" fill="#e0f8ec" stroke="#90d8b0" stroke-width=".6"/><circle cx="25.600" cy="24.600" r="2.200" fill="#d8f0d8" stroke="#9cd8a0" stroke-width=".6"/><circle cx="15.500" cy="18.600" r="7.800" fill="rgba(255,255,255,.45)" stroke="#cc2014" stroke-width="2.600"/><path d="M10 13.200l11 10.800" stroke="#cc2014" stroke-width="2.600"/></svg>
<div class="tc" style="left:1552.20px;top:933.40px;color:#1a6fd6;">화면 보호기</div>
<div class="tc" style="left:1552.20px;top:946.70px;color:#7a7a7a;">없음</div>
<div class="a" style="left:381.30px;top:381.90px;width:154.70px;height:230.60px;background:#eee;border:1px solid #bcbcbc;box-shadow:1.5px 1.5px 2.5px rgba(0,0,0,.28)"></div><div class="t" style="left:405.60px;top:392.20px;color:#111;font-weight:bold;-webkit-text-stroke:0;">병합<i>(G)</i></div><div class="t" style="left:405.60px;top:407.80px;color:#111;">편집<i>(E)</i></div><div class="t" style="left:405.60px;top:423.10px;color:#111;">인쇄<i>(P)</i></div><div class="t" style="left:405.60px;top:438.40px;color:#111;">연결 프로그램<i>(H)</i></div><svg style="left:523.00px;top:434.10px" width="5.20" height="8.60" viewBox="0 0 5.200 8.600"><path d="M.5.5l4 3.800-4 3.800" fill="none" stroke="#505050" stroke-width="1"/></svg><div class="a" style="left:388.40px;top:448.70px;width:139.70px;height:1.40px;background:linear-gradient(#b4b4b4 55%,#fafafa 55%)"></div><div class="t" style="left:405.60px;top:458.80px;color:#111;">액세스 권한 부여 <i>(G)</i></div><svg style="left:523.00px;top:454.50px" width="5.20" height="8.60" viewBox="0 0 5.200 8.600"><path d="M.5.5l4 3.800-4 3.800" fill="none" stroke="#505050" stroke-width="1"/></svg><div class="a" style="left:388.40px;top:469.00px;width:139.70px;height:1.40px;background:linear-gradient(#b4b4b4 55%,#fafafa 55%)"></div><div class="t" style="left:405.60px;top:479.00px;color:#111;">보내기<i>(N)</i></div><svg style="left:523.00px;top:474.70px" width="5.20" height="8.60" viewBox="0 0 5.200 8.600"><path d="M.5.5l4 3.800-4 3.800" fill="none" stroke="#505050" stroke-width="1"/></svg><div class="t" style="left:405.60px;top:494.40px;color:#111;">폴더로 이동<i>(V)...</i></div><div class="a" style="left:388.40px;top:504.60px;width:139.70px;height:1.40px;background:linear-gradient(#b4b4b4 55%,#fafafa 55%)"></div><div class="t" style="left:405.60px;top:515.00px;color:#111;">잘라내기<i>(T)</i></div><div class="t" style="left:405.60px;top:530.30px;color:#111;">복사<i>(C)</i></div><div class="a" style="left:388.40px;top:539.90px;width:139.70px;height:1.40px;background:linear-gradient(#b4b4b4 55%,#fafafa 55%)"></div><div class="t" style="left:405.60px;top:550.30px;color:#111;">바로 가기 만들기<i>(S)</i></div><div class="t" style="left:405.60px;top:565.60px;color:#111;">삭제<i>(D)</i></div><div class="t" style="left:405.60px;top:581.30px;color:#111;">이름 바꾸기<i>(M)</i></div><div class="a" style="left:388.40px;top:591.50px;width:139.70px;height:1.40px;background:linear-gradient(#b4b4b4 55%,#fafafa 55%)"></div><div class="t" style="left:405.60px;top:601.60px;color:#111;">속성<i>(R)</i></div>
<div class="a" style="left:1610.90px;top:409.40px;width:180.20px;height:301.70px;background:#eee;border:1px solid #bcbcbc;box-shadow:1.5px 1.5px 2.5px rgba(0,0,0,.28)"></div><div class="t" style="left:1635.20px;top:419.50px;color:#111;font-weight:bold;-webkit-text-stroke:0;">편집<i>(E)</i></div><div class="t" style="left:1635.20px;top:435.10px;color:#111;"><i>Image Preview</i></div><div class="t" style="left:1635.20px;top:450.40px;color:#111;">인쇄<i>(P)</i></div><div class="t" style="left:1635.20px;top:465.70px;color:#111;">바탕 화면 배경으로 설정<i>(N)</i></div><div class="a" style="left:1618.50px;top:475.80px;width:165.30px;height:1.40px;background:linear-gradient(#b4b4b4 55%,#fafafa 55%)"></div><div class="t" style="left:1635.20px;top:485.80px;color:#111;">오른쪽으로 회전<i>(T)</i></div><div class="t" style="left:1635.20px;top:501.50px;color:#111;">왼쪽으로 회전<i>(L)</i></div><div class="a" style="left:1618.50px;top:511.20px;width:165.30px;height:1.40px;background:linear-gradient(#b4b4b4 55%,#fafafa 55%)"></div><div class="t" style="left:1635.20px;top:521.60px;color:#111;">장치로 캐스트</div><svg style="left:1778.80px;top:517.30px" width="5.20" height="8.60" viewBox="0 0 5.200 8.600"><path d="M.5.5l4 3.800-4 3.800" fill="none" stroke="#505050" stroke-width="1"/></svg><div class="t" style="left:1635.20px;top:537.20px;color:#111;">연결 프로그램<i>(H)</i></div><svg style="left:1778.80px;top:532.90px" width="5.20" height="8.60" viewBox="0 0 5.200 8.600"><path d="M.5.5l4 3.800-4 3.800" fill="none" stroke="#505050" stroke-width="1"/></svg><div class="a" style="left:1618.50px;top:546.90px;width:165.30px;height:1.40px;background:linear-gradient(#b4b4b4 55%,#fafafa 55%)"></div><div class="t" style="left:1635.20px;top:557.70px;color:#111;">액세스 권한 부여 <i>(G)</i></div><svg style="left:1778.80px;top:553.40px" width="5.20" height="8.60" viewBox="0 0 5.200 8.600"><path d="M.5.5l4 3.800-4 3.800" fill="none" stroke="#505050" stroke-width="1"/></svg><div class="a" style="left:1618.50px;top:567.10px;width:165.30px;height:1.40px;background:linear-gradient(#b4b4b4 55%,#fafafa 55%)"></div><div class="t" style="left:1635.20px;top:577.80px;color:#111;">보내기<i>(N)</i></div><svg style="left:1778.80px;top:573.50px" width="5.20" height="8.60" viewBox="0 0 5.200 8.600"><path d="M.5.5l4 3.800-4 3.800" fill="none" stroke="#505050" stroke-width="1"/></svg><div class="t" style="left:1635.20px;top:593.10px;color:#111;">폴더로 이동<i>(V)...</i></div><div class="a" style="left:1618.50px;top:602.80px;width:165.30px;height:1.40px;background:linear-gradient(#b4b4b4 55%,#fafafa 55%)"></div><div class="t" style="left:1635.20px;top:613.60px;color:#111;">잘라내기<i>(T)</i></div><div class="t" style="left:1635.20px;top:628.90px;color:#111;">복사<i>(C)</i></div><div class="a" style="left:1618.50px;top:638.60px;width:165.30px;height:1.40px;background:linear-gradient(#b4b4b4 55%,#fafafa 55%)"></div><div class="t" style="left:1635.20px;top:649.00px;color:#111;">바로 가기 만들기<i>(S)</i></div><div class="t" style="left:1635.20px;top:664.70px;color:#111;">삭제<i>(D)</i></div><div class="t" style="left:1635.20px;top:679.90px;color:#111;">이름 바꾸기<i>(M)</i></div><div class="a" style="left:1618.50px;top:689.60px;width:165.30px;height:1.40px;background:linear-gradient(#b4b4b4 55%,#fafafa 55%)"></div><div class="t" style="left:1635.20px;top:700.40px;color:#111;">속성<i>(R)</i></div>
<div class="a" style="left:0.00px;top:986.50px;width:1792.00px;height:21.50px;background:#101010"></div>
<svg style="left:6.80px;top:991.00px" width="11.60" height="11.60" viewBox="0 0 10.400 10.400"><path d="M0 1.500L4.200.9v4H0zM4.900.8L10.400 0v4.900H4.900zM0 5.600h4.200v4L0 9zM4.900 5.600h5.500v4.800L4.900 9.600z" fill="#fff"/></svg>
<svg style="left:31.80px;top:990.60px" width="12.20" height="12.40" viewBox="0 0 10.600 11"><circle cx="6.400" cy="4.200" r="3.500" fill="none" stroke="#fff" stroke-width="1.100"/><path d="M4 6.800L.6 10.400" stroke="#fff" stroke-width="1.300"/></svg>
<svg style="left:59.00px;top:990.80px" width="11.60" height="11.60" viewBox="0 0 34 34"><circle cx="17" cy="17" r="16.600" fill="#2aa3e0"/><path d="M2 12C5 3 13 .4 18 .4c9 0 15.800 6.400 15.800 14 0 5-4 8.400-8.600 8.400-3.800 0-6.400-1.600-6.400-3.400 0-1.400 1.400-1.800 1.400-4 0-3-3-5.600-7.200-5.600C8 9.800 4 11 2 12z" fill="#4ed0a0"/><path d="M12.600 20c0 6 5 10.800 11.800 10.800 2.600 0 5-.8 6.800-2-3 4-7.600 5.200-11.600 5.200C10.200 34 2.600 28 1 19c2.400-5.600 7-9.200 12.400-9.200-1 2.600-.8 6.400-.8 10.200z" fill="#155eaa"/></svg>
<div class="a" style="left:78.70px;top:986.50px;width:25.10px;height:21.50px;background:#343434"></div>
<div class="a" style="left:78.70px;top:1006.50px;width:25.10px;height:1.50px;background:#76b9ed"></div>
<svg style="left:84.60px;top:991.40px" width="12.60" height="10.60" viewBox="0 0 12.600 10.600"><path d="M0 .6h4.600l1 1.200h7v8.800H0z" fill="#f5c542"/><path d="M0 3.200h12.600v7.400H0z" fill="#fbd96a"/><rect x="3.400" y="6.400" width="5.800" height="4.200" fill="#3a8ee0"/><rect x="4.600" y="7.600" width="3.400" height="3" fill="#f5c542"/></svg>
<svg style="left:1645.60px;top:992.20px" width="10.80" height="8.60" viewBox="0 0 10.800 8.600"><path d="M0 8.600L5.400.4l1.400 2.200L2.600 8.600z" fill="#e02a2a"/><path d="M5.400 4.200l2.800 4.400h2.600L6.800 2.600z" fill="#2ac04a"/></svg>
<svg style="left:1662.00px;top:992.00px" width="11.40" height="9.40" viewBox="0 0 11.400 9.400"><rect x="3.400" y=".6" width="7.400" height="5.400" fill="none" stroke="#fff" stroke-width="1"/><path d="M5 8.600h4.400M7.200 6v2.600" stroke="#fff" stroke-width="1"/><rect x=".5" y="1.600" width="2.400" height="7" fill="#101010" stroke="#fff" stroke-width=".9"/></svg>
<svg style="left:1679.00px;top:992.00px" width="11.40" height="9.40" viewBox="0 0 11.400 9.400"><path d="M.5 3.200h2L5.200.8v7.800L2.500 6.200h-2z" fill="none" stroke="#fff" stroke-width=".9"/><path d="M6.800 2.800c.9.900.9 2.900 0 3.800M8.400 1.600c1.600 1.600 1.600 4.600 0 6.200M10 .6c2 2.200 2 6 0 8.200" fill="none" stroke="#fff" stroke-width=".8"/></svg>
<div class="tc" style="left:1700.20px;top:996.80px;color:#fff;font-size:12.4px;-webkit-text-stroke:0;letter-spacing:0"><i>A</i></div>
<div class="t fd" style="left:1713.00px;top:996.80px;color:#fff;">오후 <i>12:04</i></div>
<svg style="left:1763.40px;top:991.60px" width="11.40" height="10.60" viewBox="0 0 11.400 10.600"><path d="M.5.5h10.400v7.600H5.800L3.400 10.200V8.100H.5z" fill="none" stroke="#fff" stroke-width=".9"/></svg>
<div class="a" style="left:1789.20px;top:986.50px;width:0.80px;height:21.50px;background:#5a5a5a"></div>
</div></body></html>
